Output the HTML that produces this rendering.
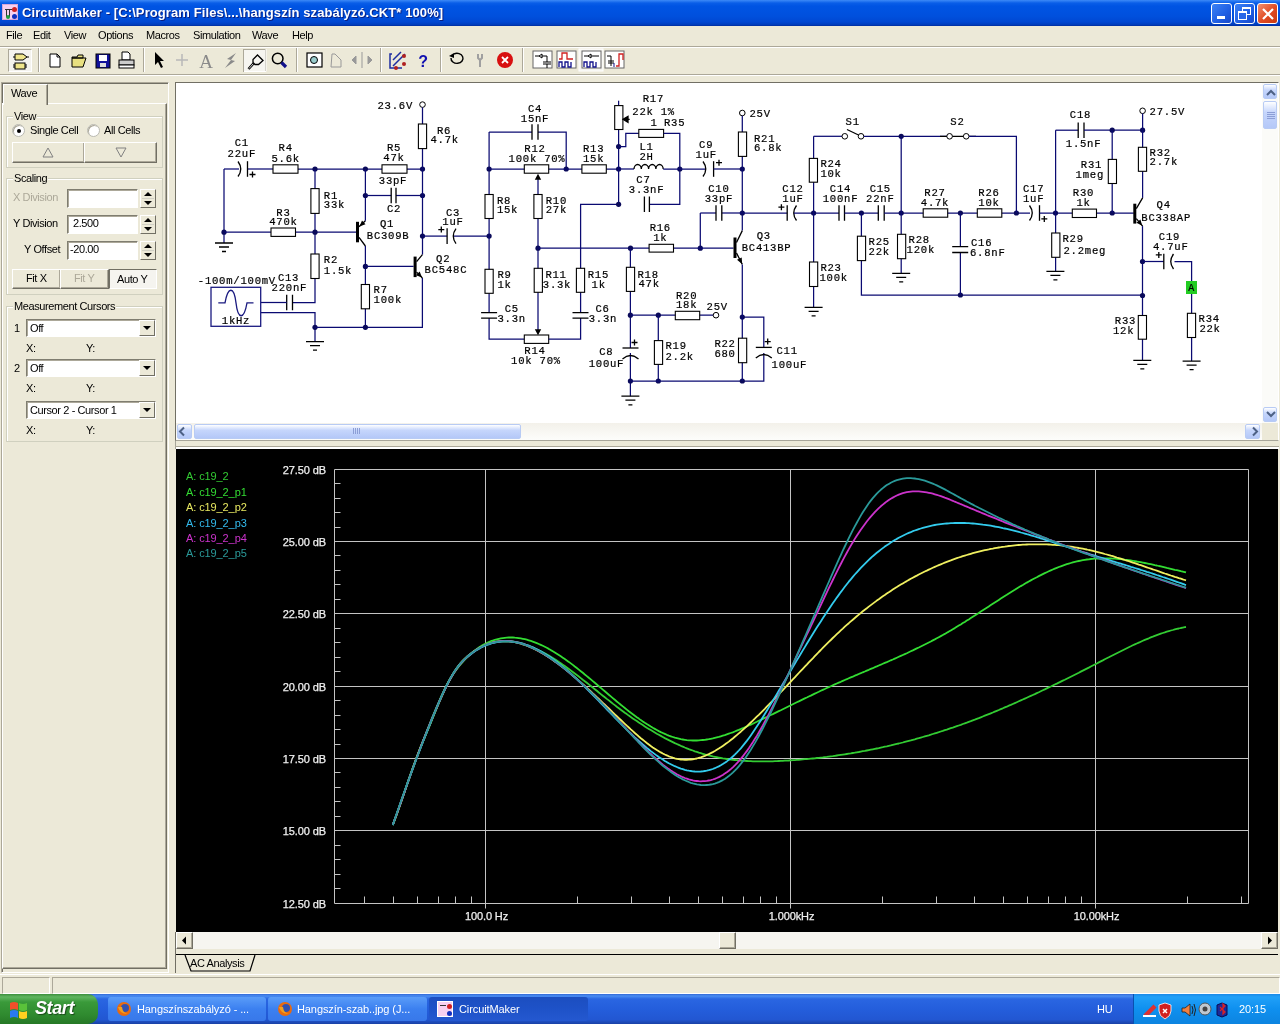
<!DOCTYPE html>
<html><head><meta charset="utf-8">
<style>
*{box-sizing:border-box}
html,body{margin:0;padding:0;width:1280px;height:1024px;overflow:hidden;background:#ece9d8;font-family:"Liberation Sans",sans-serif;font-size:11px;color:#000;letter-spacing:-0.4px}
.a{position:absolute;will-change:transform}
#title{left:0;top:0;width:1280px;height:26px;background:linear-gradient(#3d8af7 0,#0a5ee8 3px,#0054e3 6px,#0050dd 16px,#0047d2 22px,#003bb8 25px,#002a9a 26px)}
#title .tt{left:22px;top:5px;color:#fff;font-weight:bold;font-size:13px;letter-spacing:0.1px;text-shadow:1px 1px 0 #0a1f80;white-space:nowrap}
.wb{top:3px;width:21px;height:21px;border:1px solid #fff;border-radius:3px;background:linear-gradient(135deg,#3c82f5,#1f5ee3 60%,#1848c8)}
.menu span{position:absolute;top:29px;font-size:11px;will-change:transform}
.sep{width:2px;border-left:1px solid #aca899;border-right:1px solid #fff}
.frame{border:1px solid #7f7d70}
.btn3d{background:#ece9d8;border:1px solid;border-color:#fff #716f64 #716f64 #fff;box-shadow:inset -1px -1px 0 #aca899}
.grp{border:1px solid #d0d0bf;box-shadow:inset 1px 1px 0 #fff}
.lbl{position:absolute;will-change:transform;background:#ece9d8;padding:0 1px;white-space:nowrap}
.edit{background:#fff;border:1px solid;border-color:#7f7d70 #fff #fff #7f7d70;box-shadow:inset 1px 1px 0 #aca899}
.spin{background:#ece9d8;border:1px solid;border-color:#fff #716f64 #716f64 #fff}
.tri{width:0;height:0;border-left:4px solid transparent;border-right:4px solid transparent}
svg text{font-family:"Liberation Mono",monospace}
#sch{will-change:transform}
#sch text{font-size:10.6px;letter-spacing:0.75px;fill:#000;stroke:#000;stroke-width:0.2px}
#sch .w{stroke:#0a0a72;stroke-width:1.25;fill:none}
#sch .dt{fill:#0a0a5a}
#sch .rb{fill:#fff;stroke:#000;stroke-width:1.1}
#sch .pl{stroke:#000;stroke-width:1.3;fill:none}
#sch .tm{fill:#fff;stroke:#000;stroke-width:1}
#sch .src{fill:#fff;stroke:#1a1a80;stroke-width:1.3}
#sch .sw{stroke:#1a1a80;stroke-width:1.3;fill:none}
#chart text{font-family:"Liberation Sans",sans-serif;letter-spacing:-0.1px}
#chart .ct{fill:#f0f0f0;font-size:11px;stroke:#f0f0f0;stroke-width:0.25px}
#chart .lg{font-size:11px}
.xpbtn{background:linear-gradient(#fff 0,#c6d6fc 40%,#b4c8f8);border:1px solid #b8cbf4;border-radius:2px}
.task{top:997px;height:24px;border-radius:3px;color:#fff;font-size:11px;white-space:nowrap;overflow:hidden}
</style></head><body>
<!-- title bar -->
<div id="title" class="a">
  <div class="a" style="left:2px;top:4px;width:16px;height:16px;background:#f7d0f0;border:1px solid #d8a8d8">
    <div class="a" style="left:2px;top:4px;width:7px;height:1px;background:#333"></div>
    <div class="a" style="left:3px;top:4px;width:1px;height:8px;background:#333"></div>
    <div class="a" style="left:6px;top:4px;width:1px;height:8px;background:#333"></div>
    <div class="a" style="left:9px;top:2px;width:5px;height:5px;border-radius:3px;background:#d02020"></div>
    <div class="a" style="left:9px;top:9px;width:5px;height:5px;border-radius:3px;background:#1030c0"></div>
    <div class="a" style="left:3px;top:10px;width:4px;height:4px;border-radius:2px;background:#20a040"></div>
  </div>
  <div class="a tt">CircuitMaker - [C:\Program Files\...\hangszín szabályzó.CKT* 100%]</div>
  <div class="a wb" style="left:1211px"><div class="a" style="left:5px;top:12px;width:8px;height:3px;background:#fff"></div></div>
  <div class="a wb" style="left:1234px"><div class="a" style="left:7px;top:3px;width:9px;height:8px;border:1px solid #fff;border-top-width:2px"></div><div class="a" style="left:3px;top:7px;width:9px;height:9px;border:1px solid #fff;border-top-width:2px;background:#2a68e8"></div></div>
  <div class="a wb" style="left:1257px;background:linear-gradient(135deg,#f09070,#e04a22 55%,#c83a10)"><svg class="a" style="left:4px;top:4px" width="12" height="12"><path d="M1,1 L11,11 M11,1 L1,11" stroke="#fff" stroke-width="2.2"/></svg></div>
</div>
<!-- menu -->
<div class="menu">
<span style="left:6px">File</span><span style="left:33px">Edit</span><span style="left:64px">View</span><span style="left:98px">Options</span><span style="left:146px">Macros</span><span style="left:193px">Simulation</span><span style="left:252px">Wave</span><span style="left:292px">Help</span>
</div>
<div class="a" style="left:0;top:46px;width:1280px;height:1px;background:#aca899"></div>
<div class="a" style="left:0;top:47px;width:1280px;height:1px;background:#fff"></div>
<div class="a" style="left:0;top:74px;width:1280px;height:1px;background:#aca899"></div>
<div class="a" style="left:0;top:75px;width:1280px;height:1px;background:#fff"></div>
<!-- toolbar -->
<div class="a" style="left:8px;top:49px;width:24px;height:23px;background:#f4f3ee;border:1px solid;border-color:#aca899 #fff #fff #aca899"></div>
<svg class="a" style="left:0;top:44px" width="640" height="32">
 <g stroke="#000" stroke-width="1" fill="#f0e68c">
  <path d="M15,10 h8 l4,3 l-4,3 h-8 z"/><path d="M13,13 h2 M27,13 h2"/>
  <rect x="15" y="19" width="10" height="6"/><path d="M13,21 h2 M13,23 h2 M25,21 h2 M25,23 h2"/>
 </g>
 <path d="M38.5,4 V28" stroke="#aca899"/><path d="M39.5,4 V28" stroke="#fff"/>
 <path d="M50,10 h7 l3,3 v10 h-10 z" fill="#fff" stroke="#000"/><path d="M57,10 v3 h3" fill="none" stroke="#000"/>
 <path d="M72,13 h5 l1,-2 h5 v3 h-11 z M72,14 h14 l-3,9 h-11 z" fill="#e8e080" stroke="#000"/>
 <rect x="96" y="10" width="14" height="14" fill="#10109a" stroke="#000"/><rect x="99" y="11" width="8" height="6" fill="#fff"/><rect x="100" y="19" width="6" height="4" fill="#ddd"/>
 <path d="M122,8 h6 l2,2 v6 h-8 z" fill="#fff" stroke="#000"/><rect x="119" y="16" width="15" height="5" fill="#ccc" stroke="#000"/><rect x="119" y="21" width="15" height="3" fill="#fff" stroke="#000"/>
 <path d="M143.5,4 V28" stroke="#aca899"/><path d="M144.5,4 V28" stroke="#fff"/>
 <path d="M155,8 l0,13 l3,-3 l3,6 l2,-1 l-3,-6 l4,0 z" fill="#000"/>
 <path d="M182,10 v12 M176,16 h12" stroke="#b8b8b8" stroke-width="1.5"/>
 <text x="206" y="24" text-anchor="middle" style="font-family:'Liberation Serif',serif;font-size:19px;fill:#8a8a8a">A</text>
 <path d="M236,9 l-9,6 l4,1 l-6,8 l10,-7 l-4,-1 z" fill="#8a8a8a"/>
 <rect x="243.5" y="5.5" width="22" height="22" fill="#f6f5f0" stroke="#aca899"/><path d="M244,27.5 H266 V5" stroke="#fff" fill="none"/>
 <path d="M257.5,11 L263,16.5 L258.5,20.5 L255,20.5 L253,18.5 L253,15.5 Z" fill="none" stroke="#000" stroke-width="1.3"/>
 <path d="M253.5,19.5 L248.5,25" stroke="#000" stroke-width="2.6"/><path d="M253,20 L249,24.5" stroke="#fff" stroke-width="0.8"/>
 <circle cx="277.7" cy="14.5" r="5.3" fill="none" stroke="#000" stroke-width="1.5"/><path d="M281.5,18.5 l4.5,4.5" stroke="#10108a" stroke-width="3.2"/>
 <path d="M296.5,4 V28" stroke="#aca899"/><path d="M297.5,4 V28" stroke="#fff"/>
 <rect x="307" y="9" width="15" height="14" fill="#fff" stroke="#000" stroke-width="1.2"/><circle cx="314" cy="16" r="3.5" fill="#9cc" stroke="#000"/>
 <path d="M332,10 h3 l6,6 v7 h-10 z" fill="none" stroke="#999"/>
 <path d="M356,12 l-4,4 l4,4 z M368,12 l4,4 l-4,4 z M362,8 v16" fill="#999" stroke="#999"/>
 <path d="M380.5,4 V28" stroke="#aca899"/><path d="M381.5,4 V28" stroke="#fff"/>
 <path d="M392,10 h-2 v14 h12 M393,22 l12,-12 M393,16 l8,-8" stroke="#1c2ca0" stroke-width="1.5" fill="none"/><circle cx="404" cy="12" r="2" fill="#b02020"/><circle cx="404" cy="20" r="2" fill="#b02020"/><circle cx="396" cy="24" r="2" fill="#b02020"/>
 <text x="423" y="23" text-anchor="middle" style="font-family:'Liberation Sans';font-weight:bold;font-size:16px;fill:#1010b0">?</text>
 <path d="M440.5,4 V28" stroke="#aca899"/><path d="M441.5,4 V28" stroke="#fff"/>
 <path d="M451,14 a6,5 0 1 0 3,-4" fill="none" stroke="#000" stroke-width="1.4"/><path d="M449,12 l5,-3 l0,5 z" fill="#000"/>
 <path d="M478,10 v4 l2,2 v7 M482,10 v4 l-2,2" stroke="#a0a0a0" stroke-width="2" fill="none"/>
 <circle cx="505" cy="16" r="8" fill="#d81010"/><path d="M502,13 l6,6 M508,13 l-6,6" stroke="#fff" stroke-width="1.8"/>
 <path d="M522.5,4 V28" stroke="#aca899"/><path d="M523.5,4 V28" stroke="#fff"/>
 <rect x="533" y="7" width="19" height="17" fill="#fff" stroke="#666"/><path d="M535,12 h4 l3,-2 v4 l-3,-2 M542,12 h5 v6 M543,18 h8 M543,20 h8 M547,20 v4" stroke="#000" fill="none"/>
 <rect x="557" y="7" width="19" height="17" fill="#fff" stroke="#666"/><path d="M559,15 h3 v-6 h5 v6 h6" stroke="#d02020" fill="none" stroke-width="1.3"/><path d="M559,23 v-5 h3 v5 h3 v-5 h3 v5 h3 v-5" stroke="#10108a" fill="none" stroke-width="1.3"/>
 <rect x="579" y="5" width="24" height="22" fill="#f4f3ee" stroke="#fff"/>
 <rect x="582" y="7" width="19" height="17" fill="#fff" stroke="#666"/><path d="M584,12 h4 l3,-2 v4 l-3,-2 M591,12 h8" stroke="#000" fill="none"/><path d="M584,23 v-5 h3 v5 h3 v-5 h3 v5 h3 v-5" stroke="#10108a" fill="none" stroke-width="1.3"/>
 <rect x="605" y="7" width="19" height="17" fill="#fff" stroke="#666"/><path d="M607,12 h4 M611,12 v10 M608,17 h6 M608,19 h6" stroke="#000" fill="none"/><path d="M616,22 h3 v-12 h4 v6" stroke="#d02020" fill="none" stroke-width="1.3"/><path d="M614,23 v-4" stroke="#10108a"/>
</svg>
<!-- left panel -->
<div class="a" style="left:1px;top:82px;width:168px;height:891px;border:1px solid;border-color:#aca899 #fff #fff #aca899;box-shadow:inset 1px 1px 0 #716f64"></div>
<div class="a" style="left:2px;top:103px;width:165px;height:866px;border:1px solid;border-color:#fff #716f64 #716f64 #fff;box-shadow:inset -1px -1px 0 #aca899"></div>
<div class="a" style="left:3px;top:84px;width:45px;height:21px;background:#ece9d8;border:1px solid;border-bottom:none;border-color:#fff #716f64 #716f64 #fff;box-shadow:inset -1px 0 0 #aca899"></div>
<div class="a" style="left:11px;top:87px">Wave</div>
<!-- View group -->
<div class="a grp" style="left:6px;top:116px;width:157px;height:52px"></div>
<div class="lbl" style="left:13px;top:110px">View</div>
<div class="a" style="left:12px;top:124px;width:13px;height:13px;border-radius:7px;background:#fff;border:1px solid #b8b8b0;box-shadow:inset 1px 1px 0 #aca899"><div class="a" style="left:4px;top:4px;width:4px;height:4px;border-radius:2px;background:#000"></div></div>
<div class="a" style="left:30px;top:124px">Single Cell</div>
<div class="a" style="left:87px;top:124px;width:13px;height:13px;border-radius:7px;background:#fff;border:1px solid #b8b8b0;box-shadow:inset 1px 1px 0 #aca899"></div>
<div class="a" style="left:104px;top:124px">All Cells</div>
<div class="a btn3d" style="left:12px;top:142px;width:73px;height:21px"></div>
<div class="a btn3d" style="left:84px;top:142px;width:73px;height:21px"></div>
<svg class="a" style="left:0;top:140px" width="170" height="25"><path d="M43,17 h10 l-5,-9 z" fill="none" stroke="#808080"/><path d="M116,8 h10 l-5,9 z" fill="none" stroke="#808080"/></svg>
<!-- Scaling -->
<div class="a grp" style="left:6px;top:178px;width:157px;height:117px"></div>
<div class="lbl" style="left:13px;top:172px">Scaling</div>
<div class="a" style="left:13px;top:191px;color:#aca899">X Division</div>
<div class="a edit" style="left:67px;top:189px;width:71px;height:19px"></div>
<div class="a spin" style="left:140px;top:189px;width:16px;height:19px"></div>
<div class="a" style="left:13px;top:217px">Y Division</div>
<div class="a edit" style="left:67px;top:215px;width:71px;height:19px"></div>
<div class="a" style="left:73px;top:217px">2.500</div>
<div class="a spin" style="left:140px;top:215px;width:16px;height:19px"></div>
<div class="a" style="left:24px;top:243px">Y Offset</div>
<div class="a edit" style="left:67px;top:241px;width:71px;height:19px"></div>
<div class="a" style="left:70px;top:243px">-20.00</div>
<div class="a spin" style="left:140px;top:241px;width:16px;height:19px"></div>
<svg class="a" style="left:140px;top:189px" width="16" height="72">
 <path d="M4,7 h8 l-4,-4 z M4,12 h8 l-4,4 z M4,33 h8 l-4,-4 z M4,38 h8 l-4,4 z M4,59 h8 l-4,-4 z M4,64 h8 l-4,4 z" fill="#000"/>
 <path d="M2,9.5 h12 M2,35.5 h12 M2,61.5 h12" stroke="#d0cfc4"/>
</svg>
<div class="a btn3d" style="left:12px;top:269px;width:49px;height:20px"></div>
<div class="a btn3d" style="left:60px;top:269px;width:49px;height:20px"></div>
<div class="a" style="left:109px;top:269px;width:48px;height:20px;background:#f5f4ef;border:1px solid;border-color:#716f64 #fff #fff #716f64"></div>
<div class="a" style="left:26px;top:272px">Fit X</div>
<div class="a" style="left:74px;top:272px;color:#aca899">Fit Y</div>
<div class="a" style="left:117px;top:273px">Auto Y</div>
<!-- Measurement cursors -->
<div class="a grp" style="left:6px;top:306px;width:157px;height:136px"></div>
<div class="lbl" style="left:13px;top:300px">Measurement Cursors</div>
<div class="a" style="left:14px;top:322px">1</div>
<div class="a edit" style="left:26px;top:319px;width:130px;height:18px"></div>
<div class="a" style="left:30px;top:322px">Off</div>
<div class="a spin" style="left:139px;top:320px;width:16px;height:16px"></div>
<div class="a" style="left:26px;top:342px">X:</div><div class="a" style="left:86px;top:342px">Y:</div>
<div class="a" style="left:14px;top:362px">2</div>
<div class="a edit" style="left:26px;top:359px;width:130px;height:18px"></div>
<div class="a" style="left:30px;top:362px">Off</div>
<div class="a spin" style="left:139px;top:360px;width:16px;height:16px"></div>
<div class="a" style="left:26px;top:382px">X:</div><div class="a" style="left:86px;top:382px">Y:</div>
<div class="a edit" style="left:26px;top:401px;width:130px;height:18px"></div>
<div class="a" style="left:30px;top:404px">Cursor 2 - Cursor 1</div>
<div class="a spin" style="left:139px;top:402px;width:16px;height:16px"></div>
<div class="a" style="left:26px;top:424px">X:</div><div class="a" style="left:86px;top:424px">Y:</div>
<svg class="a" style="left:139px;top:320px" width="16" height="100"><path d="M4,6 h8 l-4,4 z M4,46 h8 l-4,4 z M4,88 h8 l-4,4 z" fill="#000"/></svg>
<!-- schematic window -->
<div class="a" style="left:175px;top:82px;width:1104px;height:359px;border:1px solid;border-color:#716f64 #fff #a8a69a #716f64;background:#fff"></div>
<div class="a" style="left:1262px;top:83px;width:16px;height:340px;background:#fbfbf8"></div>
<div class="a xpbtn" style="left:1263px;top:84px;width:14px;height:15px"></div>
<div class="a xpbtn" style="left:1263px;top:101px;width:14px;height:28px"></div>
<div class="a xpbtn" style="left:1263px;top:407px;width:14px;height:15px"></div>
<div class="a" style="left:176px;top:423px;width:1086px;height:17px;background:linear-gradient(#f3f1ea,#fdfdfb)"></div>
<div class="a xpbtn" style="left:177px;top:424px;width:15px;height:15px"></div>
<div class="a xpbtn" style="left:194px;top:424px;width:327px;height:15px"></div>
<div class="a xpbtn" style="left:1245px;top:424px;width:15px;height:15px"></div>
<div class="a" style="left:1262px;top:423px;width:16px;height:17px;background:#ece9d8"></div>
<svg class="a" style="left:176px;top:83px" width="1102" height="357">
 <path d="M1091,12 l4,-4 l4,4 M1091,329 l4,4 l4,-4 M8,344.5 l-4,4 l4,4 M1077,344.5 l4,4 l-4,4" stroke="#4d6185" stroke-width="2" fill="none"/>
 <path d="M1091,29.5 h8 M1091,31.5 h8 M1091,33.5 h8 M1091,35.5 h8" stroke="#8c9ed6" stroke-width="1"/>
 <path d="M177.5,345 v6 M179.5,345 v6 M181.5,345 v6 M183.5,345 v6" stroke="#8c9ed6" stroke-width="1"/>
</svg>
<svg id="sch" class="a" style="left:0;top:0" width="1262" height="423" viewBox="0 0 1262 423">
<defs><clipPath id="cp"><rect x="176" y="83" width="1086" height="340"/></clipPath></defs>
<g clip-path="url(#cp)">
<path d="M224.0,169.0 L239.0,169.0" class="w"/>
<path d="M247.0,169.0 L273.0,169.0" class="w"/>
<path d="M298.0,169.0 L422.0,169.0" class="w"/>
<path d="M247.5,161.2 V176.8" class="pl"/>
<path d="M238.0,161.5 Q243.5,169.0 238.0,176.5" class="pl" fill="none"/>
<path d="M249.5,174.5 H255.5 M252.5,171.5 V177.5" class="pl"/>
<rect x="273.0" y="164.8" width="25.0" height="8.4" class="rb"/>
<rect x="382.0" y="164.8" width="25.0" height="8.4" class="rb"/>
<circle cx="315.0" cy="169.0" r="2.6" class="dt"/>
<circle cx="365.4" cy="169.0" r="2.6" class="dt"/>
<circle cx="422.5" cy="169.0" r="2.6" class="dt"/>
<path d="M224.0,169.0 L224.0,243.0" class="w"/>
<circle cx="224.0" cy="232.2" r="2.6" class="dt"/>
<path d="M224.0,232.2 L356.0,232.2" class="w"/>
<rect x="271.0" y="228.0" width="24.5" height="8.4" class="rb"/>
<path d="M315.0,169.0 L315.0,302.5 L292.5,302.5" class="w"/>
<rect x="310.9" y="188.6" width="8.2" height="24.8" class="rb"/>
<rect x="310.9" y="254.0" width="8.2" height="24.5" class="rb"/>
<circle cx="315.0" cy="232.2" r="2.6" class="dt"/>
<path d="M215.0,243.0 H233.0 M219.0,247.0 H229.0 M222.0,251.5 H226.0" class="pl"/>
<path d="M286.7,294.7 V310.3 M292.5,294.7 V310.3" class="pl"/>
<path d="M260.7,302.5 L286.7,302.5" class="w"/>
<path d="M260.7,312.7 L315.0,312.7 L315.0,341.6" class="w"/>
<path d="M306.0,341.6 H324.0 M310.0,345.6 H320.0 M313.0,350.1 H317.0" class="pl"/>
<circle cx="315.0" cy="327.3" r="2.6" class="dt"/>
<path d="M315.0,327.3 L422.4,327.3 L422.4,278.0" class="w"/>
<rect x="356.0" y="221.8" width="3" height="20.5" fill="#000"/>
<path d="M359.0,226.8 L365.4,220.8 M359.0,237.3 L365.4,246.0" class="pl"/>
<path d="M359.4,226.5 L362.0,220.5 L365.5,224.3 z" fill="#000"/>
<path d="M365.4,169.0 L365.4,220.8" class="w"/>
<circle cx="365.4" cy="195.5" r="2.6" class="dt"/>
<path d="M365.4,195.5 L391.2,195.5" class="w"/>
<path d="M396.0,195.5 L422.5,195.5" class="w"/>
<path d="M391.2,187.7 V203.3 M396.0,187.7 V203.3" class="pl"/>
<circle cx="422.5" cy="195.5" r="2.6" class="dt"/>
<path d="M365.4,246.0 L365.4,327.3" class="w"/>
<circle cx="365.4" cy="266.4" r="2.6" class="dt"/>
<path d="M365.4,266.4 L413.6,266.4" class="w"/>
<rect x="361.3" y="284.5" width="8.2" height="24.3" class="rb"/>
<circle cx="365.4" cy="327.3" r="2.6" class="dt"/>
<circle cx="422.5" cy="104.6" r="2.8" class="tm"/>
<path d="M422.5,107.4 L422.5,254.6" class="w"/>
<rect x="418.4" y="124.0" width="8.2" height="24.6" class="rb"/>
<circle cx="422.5" cy="236.1" r="2.6" class="dt"/>
<rect x="413.6" y="256.6" width="3" height="20.5" fill="#000"/>
<path d="M416.6,261.6 L422.4,254.6 M416.6,272.1 L422.4,278.0" class="pl"/>
<path d="M422.0,277.6 L416.0,275.2 L419.7,271.5 z" fill="#000"/>
<rect x="211" y="287.3" width="49.7" height="39" class="src"/>
<path d="M218.3,302.9 H225 C228,286 234,286 236,302.9 C238,320 244,320 247,302.9 H253.5" class="sw"/>
<text x="236.0" y="324.3" text-anchor="middle">1kHz</text>
<text x="197.8" y="284.2" text-anchor="start">-100m/100mV</text>
<text x="277.9" y="280.6" text-anchor="start">C13</text>
<text x="271.6" y="291.1" text-anchor="start">220nF</text>
<text x="241.8" y="146.3" text-anchor="middle">C1</text>
<text x="241.8" y="157.1" text-anchor="middle">22uF</text>
<text x="285.7" y="151.2" text-anchor="middle">R4</text>
<text x="285.7" y="161.6" text-anchor="middle">5.6k</text>
<text x="394.0" y="151.2" text-anchor="middle">R5</text>
<text x="394.0" y="161.0" text-anchor="middle">47k</text>
<text x="393.0" y="184.4" text-anchor="middle">33pF</text>
<text x="394.0" y="211.8" text-anchor="middle">C2</text>
<text x="323.8" y="199.1" text-anchor="start">R1</text>
<text x="323.8" y="207.9" text-anchor="start">33k</text>
<text x="283.4" y="215.6" text-anchor="middle">R3</text>
<text x="283.4" y="225.4" text-anchor="middle">470k</text>
<text x="387.0" y="227.4" text-anchor="middle">Q1</text>
<text x="366.8" y="239.1" text-anchor="start">BC309B</text>
<text x="323.8" y="263.1" text-anchor="start">R2</text>
<text x="323.8" y="273.9" text-anchor="start">1.5k</text>
<text x="373.6" y="293.4" text-anchor="start">R7</text>
<text x="373.6" y="303.2" text-anchor="start">100k</text>
<text x="443.2" y="261.6" text-anchor="middle">Q2</text>
<text x="424.6" y="273.3" text-anchor="start">BC548C</text>
<text x="377.5" y="109.2" text-anchor="start">23.6V</text>
<text x="437.0" y="133.6" text-anchor="start">R6</text>
<text x="430.5" y="143.4" text-anchor="start">4.7k</text>
<path d="M422.5,236.1 L447.1,236.1" class="w"/>
<path d="M453.0,236.1 L489.1,236.1" class="w"/>
<path d="M447.1,228.3 V243.9" class="pl"/>
<path d="M456.0,228.6 Q450.5,236.1 456.0,243.6" class="pl" fill="none"/>
<path d="M438.3,229.6 H444.3 M441.3,226.6 V232.6" class="pl"/>
<text x="453.0" y="215.6" text-anchor="middle">C3</text>
<text x="453.0" y="225.4" text-anchor="middle">1uF</text>
<circle cx="489.1" cy="236.1" r="2.6" class="dt"/>
<path d="M489.1,132.0 L489.1,312.7" class="w"/>
<path d="M489.1,318.1 L489.1,339.2 L524.3,339.2" class="w"/>
<rect x="485.0" y="194.5" width="8.2" height="24.0" class="rb"/>
<rect x="485.0" y="269.3" width="8.2" height="24.0" class="rb"/>
<path d="M481.1,312.7 H497.1 M481.1,318.1 H497.1" class="pl"/>
<circle cx="489.1" cy="169.0" r="2.6" class="dt"/>
<path d="M489.1,132.0 L532.0,132.0" class="w"/>
<path d="M538.0,132.0 L566.2,132.0 L566.2,169.0" class="w"/>
<path d="M532.0,124.2 V139.8 M538.0,124.2 V139.8" class="pl"/>
<circle cx="566.2" cy="169.0" r="2.6" class="dt"/>
<path d="M489.1,169.0 L618.6,169.0" class="w"/>
<rect x="524.3" y="164.8" width="24.4" height="8.4" class="rb"/>
<rect x="581.9" y="164.8" width="24.4" height="8.4" class="rb"/>
<circle cx="618.6" cy="169.0" r="2.6" class="dt"/>
<path d="M538.0,177.0 L538.0,330.0" class="w"/>
<path d="M538,173.8 l-3.2,6 h6.4 z" fill="#000"/>
<rect x="533.9" y="194.5" width="8.2" height="24.0" class="rb"/>
<rect x="534.2" y="268.3" width="8.2" height="24.0" class="rb"/>
<circle cx="538.0" cy="248.2" r="2.6" class="dt"/>
<path d="M538,335.2 l-3.2,-6 h6.4 z" fill="#000"/>
<rect x="524.3" y="335.0" width="24.4" height="8.4" class="rb"/>
<path d="M548.7,339.2 L580.6,339.2 L580.6,318.1" class="w"/>
<path d="M580.6,312.7 L580.6,204.3 L618.6,204.3" class="w"/>
<rect x="576.4" y="268.3" width="8.2" height="24.0" class="rb"/>
<path d="M572.5,312.7 H588.5 M572.5,318.1 H588.5" class="pl"/>
<path d="M618.6,100.7 L618.6,204.3" class="w"/>
<rect x="614.7" y="105.6" width="8.2" height="23.9" class="rb"/>
<path d="M629.7,119.3 H624 M623,119.3 l5,-3 v6 z" class="pl"/>
<path d="M623,119.3 l5,-3 v6 z" fill="#000"/>
<circle cx="618.6" cy="146.6" r="2.6" class="dt"/>
<circle cx="618.6" cy="204.3" r="2.6" class="dt"/>
<path d="M618.6,146.6 L625.8,146.6 L625.8,133.4 L639.0,133.4" class="w"/>
<rect x="638.8" y="129.4" width="24.8" height="8.0" class="rb"/>
<path d="M663.6,133.4 L679.8,133.4 L679.8,204.3 L649.4,204.3" class="w"/>
<path d="M644.4,196.5 V212.1 M649.4,196.5 V212.1" class="pl"/>
<circle cx="679.8" cy="169.0" r="2.6" class="dt"/>
<path d="M618.6,169.0 L634.0,169.0" class="w"/>
<path d="M634,169 a3.65,4.5 0 0 1 7.3,0 a3.65,4.5 0 0 1 7.3,0 a3.65,4.5 0 0 1 7.3,0 a3.65,4.5 0 0 1 7.3,0" class="pl" fill="none"/>
<path d="M663.2,169.0 L705.0,169.0" class="w"/>
<path d="M713.6,161.2 V176.8" class="pl"/>
<path d="M703.0,161.5 Q708.5,169.0 703.0,176.5" class="pl" fill="none"/>
<path d="M716.0,162.7 H722.0 M719.0,159.7 V165.7" class="pl"/>
<path d="M713.6,169.0 L742.3,169.0" class="w"/>
<circle cx="742.3" cy="169.0" r="2.6" class="dt"/>
<circle cx="742.3" cy="113.0" r="2.8" class="tm"/>
<path d="M742.3,115.8 L742.3,230.6" class="w"/>
<rect x="738.4" y="132.0" width="8.2" height="24.4" class="rb"/>
<circle cx="742.3" cy="213.0" r="2.6" class="dt"/>
<path d="M700.3,213.0 L716.0,213.0" class="w"/>
<path d="M721.8,213.0 L742.3,213.0" class="w"/>
<path d="M716.0,205.2 V220.8 M721.8,205.2 V220.8" class="pl"/>
<path d="M700.3,213.0 L700.3,248.2" class="w"/>
<circle cx="700.3" cy="248.2" r="2.6" class="dt"/>
<path d="M538.0,248.2 L733.5,248.2" class="w"/>
<circle cx="630.5" cy="248.2" r="2.6" class="dt"/>
<rect x="649.1" y="244.3" width="24.4" height="7.8" class="rb"/>
<rect x="733.5" y="237.5" width="3" height="20.5" fill="#000"/>
<path d="M736.5,242.5 L742.3,230.6 M736.5,253.0 L742.3,264.4" class="pl"/>
<path d="M742.1,264.0 L737.0,259.8 L741.7,257.4 z" fill="#000"/>
<path d="M630.4,248.2 L630.4,348.0" class="w"/>
<path d="M630.4,353.0 L630.4,396.2" class="w"/>
<rect x="626.4" y="267.3" width="8.2" height="24.1" class="rb"/>
<circle cx="630.4" cy="315.2" r="2.6" class="dt"/>
<circle cx="630.4" cy="381.0" r="2.6" class="dt"/>
<path d="M622.5,348.0 H638.5" class="pl"/>
<path d="M622.5,359.0 Q630.5,352.0 638.5,359.0" class="pl" fill="none"/>
<path d="M631.5,342.5 H637.5 M634.5,339.5 V345.5" class="pl"/>
<path d="M621.4,396.2 H639.4 M625.4,400.2 H635.4 M628.4,404.8 H632.4" class="pl"/>
<path d="M630.4,315.2 L713.3,315.2" class="w"/>
<circle cx="716.0" cy="315.2" r="2.8" class="tm"/>
<circle cx="658.3" cy="315.2" r="2.6" class="dt"/>
<rect x="675.3" y="311.3" width="24.4" height="8.4" class="rb"/>
<path d="M658.3,315.2 L658.3,381.0" class="w"/>
<rect x="654.4" y="340.6" width="8.2" height="23.8" class="rb"/>
<circle cx="658.3" cy="381.0" r="2.6" class="dt"/>
<path d="M630.4,381.0 L763.8,381.0 L763.8,353.0" class="w"/>
<path d="M763.8,347.4 L763.8,317.1 L742.3,317.1" class="w"/>
<circle cx="742.3" cy="381.0" r="2.6" class="dt"/>
<circle cx="742.3" cy="317.1" r="2.6" class="dt"/>
<path d="M742.3,264.4 L742.3,381.0" class="w"/>
<rect x="738.5" y="338.2" width="8.2" height="24.5" class="rb"/>
<path d="M755.8,347.4 H771.8" class="pl"/>
<path d="M755.8,358.0 Q763.8,351.0 771.8,358.0" class="pl" fill="none"/>
<path d="M764.7,341.6 H770.7 M767.7,338.6 V344.6" class="pl"/>
<text x="497.5" y="278.4" text-anchor="start">R9</text>
<text x="497.5" y="288.1" text-anchor="start">1k</text>
<text x="504.7" y="312.0" text-anchor="start">C5</text>
<text x="497.5" y="322.1" text-anchor="start">3.3n</text>
<text x="545.4" y="277.8" text-anchor="start">R11</text>
<text x="542.8" y="287.6" text-anchor="start">3.3k</text>
<text x="587.7" y="277.8" text-anchor="start">R15</text>
<text x="591.6" y="287.6" text-anchor="start">1k</text>
<text x="595.5" y="312.0" text-anchor="start">C6</text>
<text x="588.7" y="322.1" text-anchor="start">3.3n</text>
<text x="535.0" y="354.0" text-anchor="middle">R14</text>
<text x="536.0" y="364.3" text-anchor="middle">10k 70%</text>
<text x="637.5" y="277.8" text-anchor="start">R18</text>
<text x="638.5" y="286.6" text-anchor="start">47k</text>
<text x="606.3" y="354.6" text-anchor="middle">C8</text>
<text x="588.7" y="367.0" text-anchor="start">100uF</text>
<text x="686.6" y="298.6" text-anchor="middle">R20</text>
<text x="686.6" y="308.4" text-anchor="middle">18k</text>
<text x="706.6" y="310.4" text-anchor="start">25V</text>
<text x="665.5" y="349.1" text-anchor="start">R19</text>
<text x="665.5" y="359.8" text-anchor="start">2.2k</text>
<text x="714.4" y="347.1" text-anchor="start">R22</text>
<text x="714.4" y="356.9" text-anchor="start">680</text>
<text x="776.5" y="354.0" text-anchor="start">C11</text>
<text x="771.6" y="367.6" text-anchor="start">100uF</text>
<text x="496.9" y="203.9" text-anchor="start">R8</text>
<text x="496.9" y="212.7" text-anchor="start">15k</text>
<text x="535.0" y="111.6" text-anchor="middle">C4</text>
<text x="535.0" y="121.5" text-anchor="middle">15nF</text>
<text x="535.0" y="152.2" text-anchor="middle">R12</text>
<text x="508.6" y="162.3" text-anchor="start">100k 70%</text>
<text x="593.6" y="152.2" text-anchor="middle">R13</text>
<text x="593.6" y="162.0" text-anchor="middle">15k</text>
<text x="545.7" y="203.9" text-anchor="start">R10</text>
<text x="545.7" y="212.7" text-anchor="start">27k</text>
<text x="653.4" y="102.4" text-anchor="middle">R17</text>
<text x="632.3" y="115.1" text-anchor="start">22k 1%</text>
<text x="650.5" y="126.4" text-anchor="start">1</text>
<text x="664.0" y="126.4" text-anchor="start">R35</text>
<text x="646.5" y="150.2" text-anchor="middle">L1</text>
<text x="646.5" y="160.0" text-anchor="middle">2H</text>
<text x="643.4" y="183.4" text-anchor="middle">C7</text>
<text x="628.8" y="193.2" text-anchor="start">3.3nF</text>
<text x="660.3" y="231.3" text-anchor="middle">R16</text>
<text x="660.3" y="241.1" text-anchor="middle">1k</text>
<text x="706.2" y="148.3" text-anchor="middle">C9</text>
<text x="706.2" y="158.1" text-anchor="middle">1uF</text>
<text x="749.5" y="117.0" text-anchor="start">25V</text>
<text x="754.0" y="141.5" text-anchor="start">R21</text>
<text x="754.0" y="151.2" text-anchor="start">6.8k</text>
<text x="718.9" y="192.2" text-anchor="middle">C10</text>
<text x="718.9" y="202.0" text-anchor="middle">33pF</text>
<text x="763.8" y="239.1" text-anchor="middle">Q3</text>
<text x="741.7" y="250.8" text-anchor="start">BC413BP</text>
<path d="M742.3,213.0 L787.2,213.0" class="w"/>
<path d="M787.2,205.2 V220.8" class="pl"/>
<path d="M796.5,205.5 Q791.0,213.0 796.5,220.5" class="pl" fill="none"/>
<path d="M778.4,207.2 H784.4 M781.4,204.2 V210.2" class="pl"/>
<path d="M794.0,213.0 L839.0,213.0" class="w"/>
<path d="M839.0,205.2 V220.8 M844.5,205.2 V220.8" class="pl"/>
<path d="M844.5,213.0 L878.3,213.0" class="w"/>
<path d="M878.3,205.2 V220.8 M884.2,205.2 V220.8" class="pl"/>
<path d="M884.2,213.0 L1030.0,213.0" class="w"/>
<path d="M1039.5,205.2 V220.8" class="pl"/>
<path d="M1029.5,205.5 Q1035.0,213.0 1029.5,220.5" class="pl" fill="none"/>
<path d="M1041.3,218.9 H1047.3 M1044.3,215.9 V221.9" class="pl"/>
<path d="M1039.5,213.0 L1133.8,213.0" class="w"/>
<circle cx="813.6" cy="213.0" r="2.6" class="dt"/>
<circle cx="861.4" cy="213.0" r="2.6" class="dt"/>
<circle cx="901.2" cy="213.0" r="2.6" class="dt"/>
<circle cx="960.4" cy="213.0" r="2.6" class="dt"/>
<circle cx="1016.4" cy="213.0" r="2.6" class="dt"/>
<circle cx="1055.5" cy="213.0" r="2.6" class="dt"/>
<circle cx="1112.2" cy="213.0" r="2.6" class="dt"/>
<rect x="923.2" y="208.8" width="24.5" height="8.4" class="rb"/>
<rect x="977.3" y="208.8" width="24.5" height="8.4" class="rb"/>
<rect x="1072.3" y="209.1" width="24.2" height="8.4" class="rb"/>
<path d="M813.6,136.3 L813.6,307.4" class="w"/>
<rect x="809.3" y="158.4" width="8.2" height="23.8" class="rb"/>
<rect x="809.5" y="262.0" width="8.2" height="24.5" class="rb"/>
<path d="M804.6,307.4 H822.6 M808.6,311.4 H818.6 M811.6,315.9 H815.6" class="pl"/>
<path d="M813.6,136.3 L842.0,136.3" class="w"/>
<circle cx="844.8" cy="136.3" r="2.8" class="tm"/>
<circle cx="861.0" cy="136.3" r="2.8" class="tm"/>
<path d="M847,129.5 L858.5,135" class="pl"/>
<path d="M863.8,136.3 L947.0,136.3" class="w"/>
<circle cx="901.2" cy="136.3" r="2.6" class="dt"/>
<circle cx="949.6" cy="136.3" r="2.8" class="tm"/>
<circle cx="966.2" cy="136.3" r="2.8" class="tm"/>
<path d="M952.4,136.3 H963.4 M940,136.3 H946.8 M969,136.3 H976" class="pl"/>
<path d="M969.0,136.3 L1016.4,136.3 L1016.4,213.0" class="w"/>
<path d="M861.4,213.0 L861.4,295.0 L1142.5,295.0" class="w"/>
<rect x="857.4" y="236.2" width="8.2" height="24.4" class="rb"/>
<circle cx="960.4" cy="295.0" r="2.6" class="dt"/>
<path d="M901.2,136.3 L901.2,273.4" class="w"/>
<rect x="897.5" y="234.3" width="8.2" height="24.4" class="rb"/>
<path d="M892.2,273.4 H910.2 M896.2,277.4 H906.2 M899.2,281.9 H903.2" class="pl"/>
<path d="M960.4,213.0 L960.4,246.6" class="w"/>
<path d="M960.4,252.5 L960.4,295.0" class="w"/>
<path d="M952.2,246.6 H968.2 M952.2,252.5 H968.2" class="pl"/>
<path d="M1055.6,130.2 L1055.6,271.4" class="w"/>
<rect x="1051.7" y="233.0" width="8.2" height="24.3" class="rb"/>
<path d="M1046.4,271.4 H1064.4 M1050.4,275.4 H1060.4 M1053.4,279.9 H1057.4" class="pl"/>
<path d="M1055.6,130.2 L1078.2,130.2" class="w"/>
<path d="M1078.2,122.4 V138.0 M1084.0,122.4 V138.0" class="pl"/>
<path d="M1084.0,130.2 L1142.6,130.2" class="w"/>
<circle cx="1112.2" cy="130.2" r="2.6" class="dt"/>
<circle cx="1142.6" cy="130.2" r="2.6" class="dt"/>
<path d="M1112.2,130.2 L1112.2,213.0" class="w"/>
<rect x="1108.3" y="159.4" width="8.2" height="24.1" class="rb"/>
<circle cx="1142.6" cy="110.8" r="2.8" class="tm"/>
<path d="M1142.6,113.5 L1142.6,197.9" class="w"/>
<rect x="1138.4" y="147.3" width="8.2" height="24.0" class="rb"/>
<rect x="1133.3" y="203.7" width="3" height="19.9" fill="#000"/>
<path d="M1136.3,208.7 L1142.6,197.9 M1136.3,218.6 L1142.6,226.1" class="pl"/>
<path d="M1142.3,225.7 L1136.4,222.8 L1140.4,219.5 z" fill="#000"/>
<path d="M1142.5,226.1 L1142.5,360.3" class="w"/>
<circle cx="1142.5" cy="261.5" r="2.6" class="dt"/>
<circle cx="1142.5" cy="295.5" r="2.6" class="dt"/>
<rect x="1138.3" y="315.5" width="8.2" height="23.7" class="rb"/>
<path d="M1133.3,360.3 H1151.3 M1137.3,364.3 H1147.3 M1140.3,368.8 H1144.3" class="pl"/>
<path d="M1142.5,261.5 L1163.8,261.5" class="w"/>
<path d="M1163.8,253.7 V269.3" class="pl"/>
<path d="M1173.5,254.0 Q1168.0,261.5 1173.5,269.0" class="pl" fill="none"/>
<path d="M1155.8,254.9 H1161.8 M1158.8,251.9 V257.9" class="pl"/>
<path d="M1174.5,261.5 L1191.6,261.5 L1191.6,361.1" class="w"/>
<rect x="1186" y="281" width="11" height="13" fill="#22cc22"/>
<text x="1191.6" y="291.3" text-anchor="middle" style="font-size:10px">A</text>
<rect x="1187.4" y="313.3" width="8.2" height="24.2" class="rb"/>
<path d="M1182.6,361.1 H1200.6 M1186.6,365.1 H1196.6 M1189.6,369.6 H1193.6" class="pl"/>
<text x="852.7" y="124.8" text-anchor="middle">S1</text>
<text x="957.4" y="124.8" text-anchor="middle">S2</text>
<text x="820.4" y="166.8" text-anchor="start">R24</text>
<text x="820.4" y="177.2" text-anchor="start">10k</text>
<text x="820.4" y="271.3" text-anchor="start">R23</text>
<text x="819.5" y="281.1" text-anchor="start">100k</text>
<text x="793.0" y="192.2" text-anchor="middle">C12</text>
<text x="793.0" y="202.0" text-anchor="middle">1uF</text>
<text x="840.5" y="192.2" text-anchor="middle">C14</text>
<text x="840.5" y="202.0" text-anchor="middle">100nF</text>
<text x="908.6" y="243.0" text-anchor="start">R28</text>
<text x="906.6" y="253.4" text-anchor="start">120k</text>
<text x="880.3" y="192.2" text-anchor="middle">C15</text>
<text x="880.3" y="202.0" text-anchor="middle">22nF</text>
<text x="935.0" y="196.1" text-anchor="middle">R27</text>
<text x="935.0" y="205.9" text-anchor="middle">4.7k</text>
<text x="989.0" y="196.1" text-anchor="middle">R26</text>
<text x="989.0" y="205.9" text-anchor="middle">10k</text>
<text x="1033.6" y="192.2" text-anchor="middle">C17</text>
<text x="1033.6" y="202.0" text-anchor="middle">1uF</text>
<text x="1083.5" y="196.3" text-anchor="middle">R30</text>
<text x="1083.5" y="206.1" text-anchor="middle">1k</text>
<text x="868.6" y="245.0" text-anchor="start">R25</text>
<text x="868.6" y="254.7" text-anchor="start">22k</text>
<text x="971.0" y="245.9" text-anchor="start">C16</text>
<text x="970.0" y="255.7" text-anchor="start">6.8nF</text>
<text x="1080.5" y="118.0" text-anchor="middle">C18</text>
<text x="1065.8" y="146.7" text-anchor="start">1.5nF</text>
<text x="1091.5" y="168.1" text-anchor="middle">R31</text>
<text x="1089.8" y="177.5" text-anchor="middle">1meg</text>
<text x="1062.5" y="242.0" text-anchor="start">R29</text>
<text x="1063.5" y="253.6" text-anchor="start">2.2meg</text>
<text x="1149.6" y="115.2" text-anchor="start">27.5V</text>
<text x="1149.6" y="155.8" text-anchor="start">R32</text>
<text x="1149.6" y="165.0" text-anchor="start">2.7k</text>
<text x="1163.7" y="208.1" text-anchor="middle">Q4</text>
<text x="1141.3" y="220.6" text-anchor="start">BC338AP</text>
<text x="1169.5" y="240.0" text-anchor="middle">C19</text>
<text x="1153.0" y="249.9" text-anchor="start">4.7uF</text>
<text x="1114.8" y="323.6" text-anchor="start">R33</text>
<text x="1113.0" y="333.6" text-anchor="start">12k</text>
<text x="1198.6" y="322.4" text-anchor="start">R34</text>
<text x="1199.4" y="332.3" text-anchor="start">22k</text>
</g>
</svg>
<!-- chart window -->
<div class="a" style="left:175px;top:441px;width:1px;height:8px;background:#a8a69a"></div><div class="a" style="left:175px;top:446px;width:1104px;height:1px;background:#aca899"></div><div class="a" style="left:176px;top:447px;width:1103px;height:2px;background:#fff"></div>
<div class="a" style="left:176px;top:449px;width:1102px;height:483px;background:#000"></div>
<svg id="chart" class="a" style="left:0;top:0" width="1280" height="935">
<path d="M334.5,469.5 H1248.5 M334.5,483.5 h6 M334.5,498.5 h6 M334.5,512.5 h6 M334.5,527.5 h6 M334.5,541.5 H1248.5 M334.5,555.5 h6 M334.5,570.5 h6 M334.5,584.5 h6 M334.5,599.5 h6 M334.5,613.5 H1248.5 M334.5,628.5 h6 M334.5,642.5 h6 M334.5,657.5 h6 M334.5,671.5 h6 M334.5,686.5 H1248.5 M334.5,700.5 h6 M334.5,715.5 h6 M334.5,729.5 h6 M334.5,744.5 h6 M334.5,758.5 H1248.5 M334.5,772.5 h6 M334.5,787.5 h6 M334.5,801.5 h6 M334.5,816.5 h6 M334.5,830.5 H1248.5 M334.5,845.5 h6 M334.5,859.5 h6 M334.5,874.5 h6 M334.5,888.5 h6 M334.5,903.5 H1248.5 M334.5,469.5 V903.5 M1248.5,469.5 V903.5 M485.5,469.5 V908.5 M790.5,469.5 V908.5 M1095.5,469.5 V908.5 M364.5,903.5 v-7 M393.5,903.5 v-7 M417.5,903.5 v-7 M438.5,903.5 v-7 M455.5,903.5 v-7 M471.5,903.5 v-7 M577.5,903.5 v-7 M631.5,903.5 v-7 M669.5,903.5 v-7 M698.5,903.5 v-7 M722.5,903.5 v-7 M743.5,903.5 v-7 M760.5,903.5 v-7 M776.5,903.5 v-7 M882.5,903.5 v-7 M936.5,903.5 v-7 M974.5,903.5 v-7 M1003.5,903.5 v-7 M1027.5,903.5 v-7 M1048.5,903.5 v-7 M1065.5,903.5 v-7 M1081.5,903.5 v-7 M1187.5,903.5 v-7 M1241.5,903.5 v-7" stroke="#c4c4c4" stroke-width="1" fill="none"/>
<text x="326" y="473.5" text-anchor="end" class="ct">27.50 dB</text>
<text x="326" y="545.8" text-anchor="end" class="ct">25.00 dB</text>
<text x="326" y="618.2" text-anchor="end" class="ct">22.50 dB</text>
<text x="326" y="690.5" text-anchor="end" class="ct">20.00 dB</text>
<text x="326" y="762.8" text-anchor="end" class="ct">17.50 dB</text>
<text x="326" y="835.2" text-anchor="end" class="ct">15.00 dB</text>
<text x="326" y="907.5" text-anchor="end" class="ct">12.50 dB</text>
<text x="486.5" y="920" text-anchor="middle" class="ct">100.0 Hz</text>
<text x="791.5" y="920" text-anchor="middle" class="ct">1.000kHz</text>
<text x="1096.5" y="920" text-anchor="middle" class="ct">10.00kHz</text>
<text x="186" y="480.3" fill="#33cc33" class="lg">A: c19_2</text>
<text x="186" y="495.7" fill="#33dd33" class="lg">A: c19_2_p1</text>
<text x="186" y="511.1" fill="#e8e860" class="lg">A: c19_2_p2</text>
<text x="186" y="526.5" fill="#33bbee" class="lg">A: c19_2_p3</text>
<text x="186" y="541.9" fill="#cc33cc" class="lg">A: c19_2_p4</text>
<text x="186" y="557.3" fill="#2a9a9a" class="lg">A: c19_2_p5</text>
<path d="M392.8,824.8 L394.8,819.7 L396.8,814.4 L398.8,808.8 L400.8,803.0 L402.8,797.2 L404.8,791.2 L406.8,785.3 L408.8,779.3 L410.8,773.4 L412.8,767.7 L414.8,762.2 L416.8,756.8 L418.8,751.7 L420.8,746.7 L422.8,741.9 L424.8,737.1 L426.8,732.4 L428.8,727.6 L430.8,722.7 L432.8,717.7 L434.8,712.7 L436.8,707.6 L438.8,702.5 L440.8,697.7 L442.8,693.0 L444.8,688.6 L446.8,684.6 L448.8,681.0 L450.8,677.7 L452.8,674.6 L454.8,671.7 L456.8,669.1 L458.8,666.5 L460.8,664.1 L462.8,661.8 L464.8,659.7 L466.8,657.7 L468.8,655.8 L470.8,654.0 L472.8,652.4 L474.8,650.9 L476.8,649.5 L478.8,648.2 L480.8,647.0 L482.8,646.0 L484.8,645.0 L486.8,644.2 L488.8,643.4 L490.8,642.8 L492.8,642.2 L494.8,641.8 L496.8,641.4 L498.8,641.1 L500.8,641.0 L502.8,640.8 L504.8,640.8 L506.8,640.9 L508.8,641.0 L510.8,641.2 L512.8,641.5 L514.8,641.8 L516.8,642.2 L518.8,642.6 L520.8,643.2 L522.8,643.7 L524.8,644.4 L526.8,645.0 L528.8,645.8 L530.8,646.6 L532.8,647.4 L534.8,648.3 L536.8,649.2 L538.8,650.2 L540.8,651.2 L542.8,652.2 L544.8,653.3 L546.8,654.4 L548.8,655.6 L550.8,656.8 L552.8,658.0 L554.8,659.3 L556.8,660.6 L558.8,661.9 L560.8,663.3 L562.8,664.7 L564.8,666.1 L566.8,667.5 L568.8,669.0 L570.8,670.5 L572.8,672.0 L574.8,673.5 L576.8,675.0 L578.8,676.5 L580.8,678.1 L582.8,679.7 L584.8,681.2 L586.8,682.8 L588.8,684.4 L590.8,686.0 L592.8,687.6 L594.8,689.2 L596.8,690.8 L598.8,692.5 L600.8,694.1 L602.8,695.7 L604.8,697.3 L606.8,698.9 L608.8,700.4 L610.8,702.0 L612.8,703.6 L614.8,705.1 L616.8,706.7 L618.8,708.2 L620.8,709.7 L622.8,711.2 L624.8,712.7 L626.8,714.1 L628.8,715.6 L630.8,717.0 L632.8,718.4 L634.8,719.8 L636.8,721.1 L638.8,722.5 L640.8,723.8 L642.8,725.1 L644.8,726.4 L646.8,727.7 L648.8,728.9 L650.8,730.1 L652.8,731.3 L654.8,732.5 L656.8,733.7 L658.8,734.8 L660.8,735.9 L662.8,737.0 L664.8,738.1 L666.8,739.1 L668.8,740.1 L670.8,741.1 L672.8,742.1 L674.8,743.1 L676.8,744.0 L678.8,744.9 L680.8,745.8 L682.8,746.6 L684.8,747.5 L686.8,748.3 L688.8,749.1 L690.8,749.8 L692.8,750.5 L694.8,751.3 L696.8,751.9 L698.8,752.6 L700.8,753.2 L702.8,753.8 L704.8,754.4 L706.8,754.9 L708.8,755.4 L710.8,755.9 L712.8,756.4 L714.8,756.8 L716.8,757.2 L718.8,757.6 L720.8,758.0 L722.8,758.4 L724.8,758.7 L726.8,759.0 L728.8,759.3 L730.8,759.6 L732.8,759.8 L734.8,760.0 L736.8,760.2 L738.8,760.4 L740.8,760.6 L742.8,760.8 L744.8,760.9 L746.8,761.0 L748.8,761.1 L750.8,761.2 L752.8,761.3 L754.8,761.3 L756.8,761.4 L758.8,761.4 L760.8,761.4 L762.8,761.4 L764.8,761.4 L766.8,761.4 L768.8,761.4 L770.8,761.3 L772.8,761.3 L774.8,761.2 L776.8,761.1 L778.8,761.0 L780.8,760.9 L782.8,760.8 L784.8,760.7 L786.8,760.6 L788.8,760.5 L790.8,760.3 L792.8,760.2 L794.8,760.1 L796.8,759.9 L798.8,759.8 L800.8,759.6 L802.8,759.4 L804.8,759.2 L806.8,759.1 L808.8,758.9 L810.8,758.7 L812.8,758.5 L814.8,758.3 L816.8,758.0 L818.8,757.8 L820.8,757.6 L822.8,757.4 L824.8,757.1 L826.8,756.9 L828.8,756.6 L830.8,756.3 L832.8,756.1 L834.8,755.8 L836.8,755.5 L838.8,755.2 L840.8,754.9 L842.8,754.6 L844.8,754.3 L846.8,754.0 L848.8,753.7 L850.8,753.4 L852.8,753.0 L854.8,752.7 L856.8,752.3 L858.8,752.0 L860.8,751.6 L862.8,751.2 L864.8,750.9 L866.8,750.5 L868.8,750.1 L870.8,749.7 L872.8,749.3 L874.8,748.9 L876.8,748.5 L878.8,748.1 L880.8,747.6 L882.8,747.2 L884.8,746.7 L886.8,746.3 L888.8,745.8 L890.8,745.4 L892.8,744.9 L894.8,744.4 L896.8,743.9 L898.8,743.5 L900.8,743.0 L902.8,742.5 L904.8,741.9 L906.8,741.4 L908.8,740.9 L910.8,740.4 L912.8,739.8 L914.8,739.3 L916.8,738.7 L918.8,738.2 L920.8,737.6 L922.8,737.0 L924.8,736.4 L926.8,735.8 L928.8,735.3 L930.8,734.7 L932.8,734.0 L934.8,733.4 L936.8,732.8 L938.8,732.2 L940.8,731.5 L942.8,730.9 L944.8,730.2 L946.8,729.6 L948.8,728.9 L950.8,728.2 L952.8,727.6 L954.8,726.9 L956.8,726.2 L958.8,725.5 L960.8,724.8 L962.8,724.0 L964.8,723.3 L966.8,722.6 L968.8,721.8 L970.8,721.1 L972.8,720.3 L974.8,719.6 L976.8,718.8 L978.8,718.1 L980.8,717.3 L982.8,716.5 L984.8,715.7 L986.8,714.9 L988.8,714.1 L990.8,713.3 L992.8,712.5 L994.8,711.6 L996.8,710.8 L998.8,710.0 L1000.8,709.1 L1002.8,708.3 L1004.8,707.4 L1006.8,706.6 L1008.8,705.7 L1010.8,704.9 L1012.8,704.0 L1014.8,703.1 L1016.8,702.2 L1018.8,701.3 L1020.8,700.4 L1022.8,699.5 L1024.8,698.6 L1026.8,697.7 L1028.8,696.8 L1030.8,695.9 L1032.8,695.0 L1034.8,694.1 L1036.8,693.1 L1038.8,692.2 L1040.8,691.2 L1042.8,690.3 L1044.8,689.4 L1046.8,688.4 L1048.8,687.4 L1050.8,686.5 L1052.8,685.5 L1054.8,684.5 L1056.8,683.6 L1058.8,682.6 L1060.8,681.6 L1062.8,680.6 L1064.8,679.7 L1066.8,678.7 L1068.8,677.7 L1070.8,676.7 L1072.8,675.7 L1074.8,674.7 L1076.8,673.7 L1078.8,672.7 L1080.8,671.6 L1082.8,670.6 L1084.8,669.6 L1086.8,668.6 L1088.8,667.6 L1090.8,666.5 L1092.8,665.5 L1094.8,664.5 L1096.8,663.5 L1098.8,662.4 L1100.8,661.4 L1102.8,660.4 L1104.8,659.3 L1106.8,658.3 L1108.8,657.3 L1110.8,656.2 L1112.8,655.2 L1114.8,654.2 L1116.8,653.2 L1118.8,652.2 L1120.8,651.2 L1122.8,650.2 L1124.8,649.2 L1126.8,648.2 L1128.8,647.2 L1130.8,646.3 L1132.8,645.3 L1134.8,644.4 L1136.8,643.5 L1138.8,642.6 L1140.8,641.7 L1142.8,640.8 L1144.8,639.9 L1146.8,639.1 L1148.8,638.3 L1150.8,637.4 L1152.8,636.7 L1154.8,635.9 L1156.8,635.1 L1158.8,634.4 L1160.8,633.7 L1162.8,633.0 L1164.8,632.4 L1166.8,631.7 L1168.8,631.1 L1170.8,630.5 L1172.8,630.0 L1174.8,629.4 L1176.8,628.9 L1178.8,628.5 L1180.8,628.0 L1182.8,627.6 L1184.8,627.2 L1186.0,627.0" stroke="#33cc33" stroke-width="1.8" fill="none" stroke-linejoin="round"/>
<path d="M392.8,824.9 L394.8,819.3 L396.8,813.7 L398.8,808.0 L400.8,802.4 L402.8,796.8 L404.8,791.1 L406.8,785.5 L408.8,779.9 L410.8,774.3 L412.8,768.7 L414.8,763.2 L416.8,757.7 L418.8,752.2 L420.8,746.8 L422.8,741.5 L424.8,736.3 L426.8,731.1 L428.8,726.0 L430.8,721.0 L432.8,716.1 L434.8,711.3 L436.8,706.7 L438.8,702.1 L440.8,697.7 L442.8,693.5 L444.8,689.4 L446.8,685.5 L448.8,681.7 L450.8,678.2 L452.8,674.8 L454.8,671.7 L456.8,668.8 L458.8,666.2 L460.8,663.7 L462.8,661.4 L464.8,659.3 L466.8,657.3 L468.8,655.4 L470.8,653.6 L472.8,652.0 L474.8,650.4 L476.8,648.9 L478.8,647.6 L480.8,646.3 L482.8,645.1 L484.8,644.0 L486.8,643.0 L488.8,642.1 L490.8,641.2 L492.8,640.5 L494.8,639.9 L496.8,639.3 L498.8,638.8 L500.8,638.4 L502.8,638.1 L504.8,637.8 L506.8,637.6 L508.8,637.5 L510.8,637.5 L512.8,637.5 L514.8,637.7 L516.8,637.8 L518.8,638.1 L520.8,638.4 L522.8,638.8 L524.8,639.2 L526.8,639.7 L528.8,640.3 L530.8,640.9 L532.8,641.6 L534.8,642.3 L536.8,643.1 L538.8,644.0 L540.8,644.9 L542.8,645.8 L544.8,646.8 L546.8,647.8 L548.8,648.9 L550.8,650.1 L552.8,651.2 L554.8,652.4 L556.8,653.7 L558.8,655.0 L560.8,656.3 L562.8,657.7 L564.8,659.1 L566.8,660.5 L568.8,661.9 L570.8,663.4 L572.8,664.9 L574.8,666.5 L576.8,668.0 L578.8,669.6 L580.8,671.2 L582.8,672.8 L584.8,674.5 L586.8,676.1 L588.8,677.8 L590.8,679.4 L592.8,681.1 L594.8,682.8 L596.8,684.5 L598.8,686.2 L600.8,687.9 L602.8,689.6 L604.8,691.3 L606.8,693.0 L608.8,694.7 L610.8,696.4 L612.8,698.1 L614.8,699.8 L616.8,701.5 L618.8,703.1 L620.8,704.8 L622.8,706.4 L624.8,708.0 L626.8,709.6 L628.8,711.2 L630.8,712.7 L632.8,714.2 L634.8,715.7 L636.8,717.2 L638.8,718.6 L640.8,720.1 L642.8,721.4 L644.8,722.8 L646.8,724.1 L648.8,725.3 L650.8,726.6 L652.8,727.8 L654.8,728.9 L656.8,730.0 L658.8,731.1 L660.8,732.1 L662.8,733.0 L664.8,733.9 L666.8,734.8 L668.8,735.6 L670.8,736.3 L672.8,737.0 L674.8,737.7 L676.8,738.2 L678.8,738.7 L680.8,739.2 L682.8,739.5 L684.8,739.8 L686.8,740.1 L688.8,740.3 L690.8,740.4 L692.8,740.5 L694.8,740.5 L696.8,740.5 L698.8,740.4 L700.8,740.2 L702.8,740.0 L704.8,739.8 L706.8,739.5 L708.8,739.2 L710.8,738.8 L712.8,738.4 L714.8,737.9 L716.8,737.4 L718.8,736.9 L720.8,736.3 L722.8,735.7 L724.8,735.1 L726.8,734.4 L728.8,733.7 L730.8,733.0 L732.8,732.3 L734.8,731.5 L736.8,730.7 L738.8,729.9 L740.8,729.0 L742.8,728.2 L744.8,727.3 L746.8,726.4 L748.8,725.5 L750.8,724.6 L752.8,723.7 L754.8,722.7 L756.8,721.8 L758.8,720.8 L760.8,719.9 L762.8,718.9 L764.8,717.9 L766.8,717.0 L768.8,716.0 L770.8,715.0 L772.8,714.1 L774.8,713.1 L776.8,712.1 L778.8,711.1 L780.8,710.2 L782.8,709.2 L784.8,708.2 L786.8,707.2 L788.8,706.2 L790.8,705.3 L792.8,704.3 L794.8,703.3 L796.8,702.3 L798.8,701.4 L800.8,700.4 L802.8,699.4 L804.8,698.4 L806.8,697.5 L808.8,696.5 L810.8,695.6 L812.8,694.6 L814.8,693.6 L816.8,692.7 L818.8,691.8 L820.8,690.8 L822.8,689.9 L824.8,689.0 L826.8,688.0 L828.8,687.1 L830.8,686.2 L832.8,685.3 L834.8,684.4 L836.8,683.5 L838.8,682.6 L840.8,681.8 L842.8,680.9 L844.8,680.0 L846.8,679.2 L848.8,678.3 L850.8,677.4 L852.8,676.6 L854.8,675.7 L856.8,674.9 L858.8,674.0 L860.8,673.2 L862.8,672.3 L864.8,671.5 L866.8,670.6 L868.8,669.8 L870.8,668.9 L872.8,668.1 L874.8,667.2 L876.8,666.4 L878.8,665.5 L880.8,664.7 L882.8,663.8 L884.8,662.9 L886.8,662.1 L888.8,661.2 L890.8,660.3 L892.8,659.5 L894.8,658.6 L896.8,657.7 L898.8,656.8 L900.8,655.9 L902.8,655.0 L904.8,654.1 L906.8,653.2 L908.8,652.2 L910.8,651.3 L912.8,650.4 L914.8,649.4 L916.8,648.4 L918.8,647.5 L920.8,646.5 L922.8,645.5 L924.8,644.5 L926.8,643.5 L928.8,642.5 L930.8,641.5 L932.8,640.4 L934.8,639.4 L936.8,638.3 L938.8,637.2 L940.8,636.1 L942.8,635.0 L944.8,633.9 L946.8,632.7 L948.8,631.6 L950.8,630.4 L952.8,629.2 L954.8,628.1 L956.8,626.8 L958.8,625.6 L960.8,624.4 L962.8,623.1 L964.8,621.9 L966.8,620.6 L968.8,619.4 L970.8,618.1 L972.8,616.8 L974.8,615.5 L976.8,614.2 L978.8,612.9 L980.8,611.6 L982.8,610.3 L984.8,609.0 L986.8,607.7 L988.8,606.4 L990.8,605.1 L992.8,603.8 L994.8,602.5 L996.8,601.2 L998.8,599.9 L1000.8,598.6 L1002.8,597.3 L1004.8,596.0 L1006.8,594.8 L1008.8,593.5 L1010.8,592.2 L1012.8,591.0 L1014.8,589.8 L1016.8,588.5 L1018.8,587.3 L1020.8,586.1 L1022.8,585.0 L1024.8,583.8 L1026.8,582.6 L1028.8,581.5 L1030.8,580.4 L1032.8,579.3 L1034.8,578.2 L1036.8,577.2 L1038.8,576.1 L1040.8,575.1 L1042.8,574.1 L1044.8,573.1 L1046.8,572.2 L1048.8,571.3 L1050.8,570.4 L1052.8,569.5 L1054.8,568.6 L1056.8,567.8 L1058.8,567.0 L1060.8,566.3 L1062.8,565.6 L1064.8,564.9 L1066.8,564.2 L1068.8,563.6 L1070.8,563.0 L1072.8,562.4 L1074.8,561.9 L1076.8,561.4 L1078.8,561.0 L1080.8,560.6 L1082.8,560.2 L1084.8,559.8 L1086.8,559.5 L1088.8,559.3 L1090.8,559.0 L1092.8,558.8 L1094.8,558.7 L1096.8,558.6 L1098.8,558.5 L1100.8,558.4 L1102.8,558.3 L1104.8,558.3 L1106.8,558.4 L1108.8,558.4 L1110.8,558.5 L1112.8,558.6 L1114.8,558.7 L1116.8,558.8 L1118.8,559.0 L1120.8,559.2 L1122.8,559.4 L1124.8,559.7 L1126.8,559.9 L1128.8,560.2 L1130.8,560.5 L1132.8,560.8 L1134.8,561.1 L1136.8,561.5 L1138.8,561.8 L1140.8,562.2 L1142.8,562.6 L1144.8,563.0 L1146.8,563.4 L1148.8,563.8 L1150.8,564.2 L1152.8,564.6 L1154.8,565.1 L1156.8,565.5 L1158.8,566.0 L1160.8,566.4 L1162.8,566.9 L1164.8,567.4 L1166.8,567.9 L1168.8,568.3 L1170.8,568.8 L1172.8,569.3 L1174.8,569.8 L1176.8,570.2 L1178.8,570.7 L1180.8,571.2 L1182.8,571.6 L1184.8,572.1 L1186.0,572.4" stroke="#33dd33" stroke-width="1.8" fill="none" stroke-linejoin="round"/>
<path d="M392.8,824.9 L394.8,819.6 L396.8,814.1 L398.8,808.4 L400.8,802.7 L402.8,796.9 L404.8,791.1 L406.8,785.3 L408.8,779.4 L410.8,773.7 L412.8,768.0 L414.8,762.5 L416.8,757.1 L418.8,751.8 L420.8,746.7 L422.8,741.7 L424.8,736.8 L426.8,731.9 L428.8,727.1 L430.8,722.3 L432.8,717.5 L434.8,712.7 L436.8,707.9 L438.8,703.2 L440.8,698.6 L442.8,694.1 L444.8,689.7 L446.8,685.5 L448.8,681.5 L450.8,677.8 L452.8,674.2 L454.8,670.9 L456.8,668.0 L458.8,665.3 L460.8,662.9 L462.8,660.7 L464.8,658.7 L466.8,656.8 L468.8,655.1 L470.8,653.6 L472.8,652.1 L474.8,650.7 L476.8,649.4 L478.8,648.2 L480.8,647.1 L482.8,646.2 L484.8,645.3 L486.8,644.5 L488.8,643.8 L490.8,643.2 L492.8,642.6 L494.8,642.2 L496.8,641.8 L498.8,641.6 L500.8,641.4 L502.8,641.3 L504.8,641.3 L506.8,641.3 L508.8,641.4 L510.8,641.6 L512.8,641.9 L514.8,642.2 L516.8,642.7 L518.8,643.1 L520.8,643.7 L522.8,644.3 L524.8,645.0 L526.8,645.7 L528.8,646.5 L530.8,647.3 L532.8,648.2 L534.8,649.2 L536.8,650.2 L538.8,651.3 L540.8,652.4 L542.8,653.5 L544.8,654.7 L546.8,656.0 L548.8,657.3 L550.8,658.6 L552.8,660.0 L554.8,661.4 L556.8,662.8 L558.8,664.3 L560.8,665.8 L562.8,667.3 L564.8,668.9 L566.8,670.5 L568.8,672.1 L570.8,673.8 L572.8,675.5 L574.8,677.2 L576.8,678.9 L578.8,680.6 L580.8,682.4 L582.8,684.2 L584.8,686.0 L586.8,687.8 L588.8,689.6 L590.8,691.5 L592.8,693.4 L594.8,695.2 L596.8,697.1 L598.8,699.0 L600.8,700.9 L602.8,702.8 L604.8,704.7 L606.8,706.6 L608.8,708.5 L610.8,710.4 L612.8,712.4 L614.8,714.3 L616.8,716.2 L618.8,718.1 L620.8,720.0 L622.8,721.9 L624.8,723.8 L626.8,725.7 L628.8,727.5 L630.8,729.4 L632.8,731.2 L634.8,733.0 L636.8,734.7 L638.8,736.5 L640.8,738.2 L642.8,739.8 L644.8,741.4 L646.8,743.0 L648.8,744.5 L650.8,746.0 L652.8,747.4 L654.8,748.7 L656.8,750.0 L658.8,751.2 L660.8,752.4 L662.8,753.5 L664.8,754.5 L666.8,755.4 L668.8,756.3 L670.8,757.0 L672.8,757.7 L674.8,758.3 L676.8,758.8 L678.8,759.2 L680.8,759.5 L682.8,759.7 L684.8,759.8 L686.8,759.8 L688.8,759.7 L690.8,759.5 L692.8,759.3 L694.8,758.9 L696.8,758.5 L698.8,757.9 L700.8,757.3 L702.8,756.6 L704.8,755.9 L706.8,755.0 L708.8,754.1 L710.8,753.1 L712.8,752.1 L714.8,751.0 L716.8,749.8 L718.8,748.6 L720.8,747.3 L722.8,745.9 L724.8,744.5 L726.8,743.1 L728.8,741.6 L730.8,740.0 L732.8,738.5 L734.8,736.8 L736.8,735.1 L738.8,733.4 L740.8,731.7 L742.8,729.9 L744.8,728.1 L746.8,726.3 L748.8,724.4 L750.8,722.5 L752.8,720.6 L754.8,718.7 L756.8,716.7 L758.8,714.8 L760.8,712.8 L762.8,710.8 L764.8,708.8 L766.8,706.7 L768.8,704.7 L770.8,702.6 L772.8,700.6 L774.8,698.5 L776.8,696.4 L778.8,694.3 L780.8,692.2 L782.8,690.1 L784.8,688.0 L786.8,685.8 L788.8,683.7 L790.8,681.6 L792.8,679.4 L794.8,677.3 L796.8,675.2 L798.8,673.0 L800.8,670.9 L802.8,668.8 L804.8,666.7 L806.8,664.6 L808.8,662.4 L810.8,660.3 L812.8,658.3 L814.8,656.2 L816.8,654.1 L818.8,652.0 L820.8,650.0 L822.8,647.9 L824.8,645.9 L826.8,643.9 L828.8,641.9 L830.8,640.0 L832.8,638.0 L834.8,636.1 L836.8,634.2 L838.8,632.3 L840.8,630.4 L842.8,628.6 L844.8,626.7 L846.8,624.9 L848.8,623.2 L850.8,621.4 L852.8,619.7 L854.8,618.0 L856.8,616.3 L858.8,614.6 L860.8,613.0 L862.8,611.3 L864.8,609.7 L866.8,608.2 L868.8,606.6 L870.8,605.1 L872.8,603.6 L874.8,602.1 L876.8,600.6 L878.8,599.2 L880.8,597.7 L882.8,596.3 L884.8,595.0 L886.8,593.6 L888.8,592.3 L890.8,590.9 L892.8,589.6 L894.8,588.3 L896.8,587.1 L898.8,585.8 L900.8,584.6 L902.8,583.4 L904.8,582.2 L906.8,581.1 L908.8,579.9 L910.8,578.8 L912.8,577.7 L914.8,576.6 L916.8,575.6 L918.8,574.5 L920.8,573.5 L922.8,572.5 L924.8,571.5 L926.8,570.6 L928.8,569.6 L930.8,568.7 L932.8,567.8 L934.8,566.9 L936.8,566.0 L938.8,565.1 L940.8,564.3 L942.8,563.5 L944.8,562.7 L946.8,561.9 L948.8,561.1 L950.8,560.4 L952.8,559.6 L954.8,558.9 L956.8,558.2 L958.8,557.5 L960.8,556.9 L962.8,556.2 L964.8,555.6 L966.8,555.0 L968.8,554.4 L970.8,553.8 L972.8,553.2 L974.8,552.7 L976.8,552.2 L978.8,551.7 L980.8,551.2 L982.8,550.7 L984.8,550.2 L986.8,549.8 L988.8,549.4 L990.8,548.9 L992.8,548.6 L994.8,548.2 L996.8,547.8 L998.8,547.5 L1000.8,547.2 L1002.8,546.8 L1004.8,546.6 L1006.8,546.3 L1008.8,546.0 L1010.8,545.8 L1012.8,545.6 L1014.8,545.4 L1016.8,545.2 L1018.8,545.0 L1020.8,544.9 L1022.8,544.7 L1024.8,544.6 L1026.8,544.5 L1028.8,544.4 L1030.8,544.4 L1032.8,544.3 L1034.8,544.3 L1036.8,544.3 L1038.8,544.3 L1040.8,544.3 L1042.8,544.3 L1044.8,544.4 L1046.8,544.4 L1048.8,544.5 L1050.8,544.6 L1052.8,544.8 L1054.8,544.9 L1056.8,545.1 L1058.8,545.2 L1060.8,545.4 L1062.8,545.6 L1064.8,545.9 L1066.8,546.1 L1068.8,546.4 L1070.8,546.7 L1072.8,547.0 L1074.8,547.3 L1076.8,547.6 L1078.8,548.0 L1080.8,548.3 L1082.8,548.7 L1084.8,549.1 L1086.8,549.5 L1088.8,550.0 L1090.8,550.4 L1092.8,550.9 L1094.8,551.4 L1096.8,551.9 L1098.8,552.4 L1100.8,552.9 L1102.8,553.4 L1104.8,554.0 L1106.8,554.5 L1108.8,555.1 L1110.8,555.7 L1112.8,556.2 L1114.8,556.8 L1116.8,557.5 L1118.8,558.1 L1120.8,558.7 L1122.8,559.3 L1124.8,560.0 L1126.8,560.6 L1128.8,561.2 L1130.8,561.9 L1132.8,562.6 L1134.8,563.2 L1136.8,563.9 L1138.8,564.6 L1140.8,565.2 L1142.8,565.9 L1144.8,566.6 L1146.8,567.3 L1148.8,568.0 L1150.8,568.7 L1152.8,569.4 L1154.8,570.0 L1156.8,570.7 L1158.8,571.4 L1160.8,572.1 L1162.8,572.8 L1164.8,573.5 L1166.8,574.1 L1168.8,574.8 L1170.8,575.5 L1172.8,576.1 L1174.8,576.8 L1176.8,577.4 L1178.8,578.1 L1180.8,578.7 L1182.8,579.4 L1184.8,580.0 L1186.0,580.4" stroke="#f0f060" stroke-width="1.8" fill="none" stroke-linejoin="round"/>
<path d="M392.8,824.9 L394.8,819.3 L396.8,813.7 L398.8,808.0 L400.8,802.3 L402.8,796.6 L404.8,790.9 L406.8,785.3 L408.8,779.6 L410.8,774.0 L412.8,768.5 L414.8,763.0 L416.8,757.6 L418.8,752.3 L420.8,747.1 L422.8,741.9 L424.8,736.8 L426.8,731.8 L428.8,726.8 L430.8,721.8 L432.8,716.9 L434.8,712.0 L436.8,707.2 L438.8,702.6 L440.8,698.0 L442.8,693.5 L444.8,689.3 L446.8,685.2 L448.8,681.3 L450.8,677.6 L452.8,674.2 L454.8,671.0 L456.8,668.2 L458.8,665.6 L460.8,663.2 L462.8,661.1 L464.8,659.2 L466.8,657.4 L468.8,655.7 L470.8,654.2 L472.8,652.7 L474.8,651.3 L476.8,650.1 L478.8,648.9 L480.8,647.8 L482.8,646.8 L484.8,645.9 L486.8,645.0 L488.8,644.3 L490.8,643.6 L492.8,643.0 L494.8,642.6 L496.8,642.1 L498.8,641.8 L500.8,641.6 L502.8,641.4 L504.8,641.3 L506.8,641.3 L508.8,641.3 L510.8,641.4 L512.8,641.6 L514.8,641.9 L516.8,642.3 L518.8,642.7 L520.8,643.1 L522.8,643.7 L524.8,644.3 L526.8,645.0 L528.8,645.7 L530.8,646.5 L532.8,647.3 L534.8,648.3 L536.8,649.2 L538.8,650.3 L540.8,651.4 L542.8,652.5 L544.8,653.7 L546.8,654.9 L548.8,656.2 L550.8,657.6 L552.8,659.0 L554.8,660.4 L556.8,661.9 L558.8,663.5 L560.8,665.0 L562.8,666.7 L564.8,668.3 L566.8,670.0 L568.8,671.8 L570.8,673.5 L572.8,675.4 L574.8,677.2 L576.8,679.1 L578.8,681.0 L580.8,682.9 L582.8,684.8 L584.8,686.8 L586.8,688.8 L588.8,690.8 L590.8,692.8 L592.8,694.8 L594.8,696.9 L596.8,698.9 L598.8,701.0 L600.8,703.1 L602.8,705.1 L604.8,707.2 L606.8,709.3 L608.8,711.4 L610.8,713.4 L612.8,715.5 L614.8,717.6 L616.8,719.6 L618.8,721.6 L620.8,723.7 L622.8,725.7 L624.8,727.7 L626.8,729.6 L628.8,731.6 L630.8,733.5 L632.8,735.4 L634.8,737.3 L636.8,739.1 L638.8,741.0 L640.8,742.7 L642.8,744.5 L644.8,746.2 L646.8,747.9 L648.8,749.5 L650.8,751.1 L652.8,752.6 L654.8,754.1 L656.8,755.6 L658.8,757.0 L660.8,758.3 L662.8,759.6 L664.8,760.9 L666.8,762.1 L668.8,763.2 L670.8,764.2 L672.8,765.2 L674.8,766.2 L676.8,767.0 L678.8,767.8 L680.8,768.6 L682.8,769.2 L684.8,769.8 L686.8,770.3 L688.8,770.7 L690.8,771.0 L692.8,771.3 L694.8,771.5 L696.8,771.6 L698.8,771.6 L700.8,771.5 L702.8,771.3 L704.8,771.0 L706.8,770.7 L708.8,770.2 L710.8,769.6 L712.8,769.0 L714.8,768.2 L716.8,767.3 L718.8,766.4 L720.8,765.3 L722.8,764.1 L724.8,762.8 L726.8,761.4 L728.8,759.9 L730.8,758.3 L732.8,756.5 L734.8,754.6 L736.8,752.6 L738.8,750.5 L740.8,748.3 L742.8,745.9 L744.8,743.4 L746.8,740.9 L748.8,738.2 L750.8,735.4 L752.8,732.5 L754.8,729.6 L756.8,726.6 L758.8,723.5 L760.8,720.4 L762.8,717.2 L764.8,714.0 L766.8,710.7 L768.8,707.4 L770.8,704.1 L772.8,700.8 L774.8,697.4 L776.8,694.1 L778.8,690.7 L780.8,687.4 L782.8,684.0 L784.8,680.6 L786.8,677.3 L788.8,673.9 L790.8,670.5 L792.8,667.1 L794.8,663.8 L796.8,660.4 L798.8,657.1 L800.8,653.7 L802.8,650.4 L804.8,647.1 L806.8,643.8 L808.8,640.5 L810.8,637.3 L812.8,634.0 L814.8,630.8 L816.8,627.6 L818.8,624.5 L820.8,621.4 L822.8,618.3 L824.8,615.2 L826.8,612.2 L828.8,609.2 L830.8,606.2 L832.8,603.3 L834.8,600.5 L836.8,597.6 L838.8,594.9 L840.8,592.1 L842.8,589.5 L844.8,586.8 L846.8,584.3 L848.8,581.7 L850.8,579.3 L852.8,576.9 L854.8,574.5 L856.8,572.3 L858.8,570.1 L860.8,567.9 L862.8,565.8 L864.8,563.8 L866.8,561.8 L868.8,559.9 L870.8,558.0 L872.8,556.2 L874.8,554.5 L876.8,552.8 L878.8,551.2 L880.8,549.6 L882.8,548.1 L884.8,546.6 L886.8,545.2 L888.8,543.9 L890.8,542.5 L892.8,541.3 L894.8,540.1 L896.8,538.9 L898.8,537.8 L900.8,536.7 L902.8,535.7 L904.8,534.7 L906.8,533.8 L908.8,532.9 L910.8,532.1 L912.8,531.2 L914.8,530.5 L916.8,529.8 L918.8,529.1 L920.8,528.5 L922.8,527.9 L924.8,527.3 L926.8,526.8 L928.8,526.3 L930.8,525.8 L932.8,525.4 L934.8,525.0 L936.8,524.7 L938.8,524.4 L940.8,524.1 L942.8,523.9 L944.8,523.7 L946.8,523.5 L948.8,523.3 L950.8,523.2 L952.8,523.1 L954.8,523.0 L956.8,523.0 L958.8,522.9 L960.8,523.0 L962.8,523.0 L964.8,523.0 L966.8,523.1 L968.8,523.2 L970.8,523.3 L972.8,523.5 L974.8,523.7 L976.8,523.9 L978.8,524.1 L980.8,524.3 L982.8,524.6 L984.8,524.8 L986.8,525.1 L988.8,525.4 L990.8,525.7 L992.8,526.1 L994.8,526.5 L996.8,526.8 L998.8,527.2 L1000.8,527.6 L1002.8,528.1 L1004.8,528.5 L1006.8,528.9 L1008.8,529.4 L1010.8,529.9 L1012.8,530.4 L1014.8,530.9 L1016.8,531.4 L1018.8,531.9 L1020.8,532.5 L1022.8,533.0 L1024.8,533.6 L1026.8,534.2 L1028.8,534.7 L1030.8,535.3 L1032.8,535.9 L1034.8,536.5 L1036.8,537.1 L1038.8,537.7 L1040.8,538.4 L1042.8,539.0 L1044.8,539.6 L1046.8,540.3 L1048.8,540.9 L1050.8,541.5 L1052.8,542.2 L1054.8,542.8 L1056.8,543.5 L1058.8,544.1 L1060.8,544.8 L1062.8,545.5 L1064.8,546.1 L1066.8,546.8 L1068.8,547.4 L1070.8,548.1 L1072.8,548.7 L1074.8,549.4 L1076.8,550.0 L1078.8,550.7 L1080.8,551.3 L1082.8,552.0 L1084.8,552.6 L1086.8,553.2 L1088.8,553.9 L1090.8,554.5 L1092.8,555.1 L1094.8,555.7 L1096.8,556.4 L1098.8,557.0 L1100.8,557.6 L1102.8,558.2 L1104.8,558.8 L1106.8,559.4 L1108.8,560.0 L1110.8,560.7 L1112.8,561.3 L1114.8,561.9 L1116.8,562.5 L1118.8,563.1 L1120.8,563.7 L1122.8,564.3 L1124.8,564.9 L1126.8,565.5 L1128.8,566.1 L1130.8,566.8 L1132.8,567.4 L1134.8,568.0 L1136.8,568.6 L1138.8,569.2 L1140.8,569.9 L1142.8,570.5 L1144.8,571.1 L1146.8,571.8 L1148.8,572.4 L1150.8,573.0 L1152.8,573.7 L1154.8,574.3 L1156.8,575.0 L1158.8,575.6 L1160.8,576.3 L1162.8,577.0 L1164.8,577.6 L1166.8,578.3 L1168.8,579.0 L1170.8,579.7 L1172.8,580.4 L1174.8,581.1 L1176.8,581.8 L1178.8,582.5 L1180.8,583.2 L1182.8,583.9 L1184.8,584.7 L1186.0,585.1" stroke="#33ccee" stroke-width="1.8" fill="none" stroke-linejoin="round"/>
<path d="M392.8,824.9 L394.8,819.3 L396.8,813.7 L398.8,808.0 L400.8,802.4 L402.8,796.7 L404.8,791.0 L406.8,785.3 L408.8,779.6 L410.8,774.0 L412.8,768.5 L414.8,763.0 L416.8,757.6 L418.8,752.3 L420.8,747.0 L422.8,741.8 L424.8,736.7 L426.8,731.6 L428.8,726.7 L430.8,721.7 L432.8,716.8 L434.8,712.0 L436.8,707.3 L438.8,702.6 L440.8,698.1 L442.8,693.7 L444.8,689.5 L446.8,685.5 L448.8,681.6 L450.8,678.0 L452.8,674.5 L454.8,671.4 L456.8,668.5 L458.8,665.8 L460.8,663.4 L462.8,661.1 L464.8,659.1 L466.8,657.2 L468.8,655.5 L470.8,653.8 L472.8,652.3 L474.8,650.9 L476.8,649.6 L478.8,648.3 L480.8,647.2 L482.8,646.2 L484.8,645.3 L486.8,644.4 L488.8,643.7 L490.8,643.1 L492.8,642.5 L494.8,642.1 L496.8,641.7 L498.8,641.4 L500.8,641.2 L502.8,641.1 L504.8,641.1 L506.8,641.1 L508.8,641.2 L510.8,641.4 L512.8,641.7 L514.8,642.0 L516.8,642.4 L518.8,642.9 L520.8,643.5 L522.8,644.1 L524.8,644.7 L526.8,645.5 L528.8,646.3 L530.8,647.1 L532.8,648.1 L534.8,649.0 L536.8,650.0 L538.8,651.1 L540.8,652.2 L542.8,653.4 L544.8,654.6 L546.8,655.9 L548.8,657.2 L550.8,658.6 L552.8,659.9 L554.8,661.4 L556.8,662.8 L558.8,664.3 L560.8,665.9 L562.8,667.4 L564.8,669.0 L566.8,670.6 L568.8,672.3 L570.8,674.0 L572.8,675.7 L574.8,677.4 L576.8,679.2 L578.8,681.0 L580.8,682.8 L582.8,684.6 L584.8,686.5 L586.8,688.4 L588.8,690.3 L590.8,692.2 L592.8,694.1 L594.8,696.1 L596.8,698.1 L598.8,700.1 L600.8,702.1 L602.8,704.1 L604.8,706.2 L606.8,708.2 L608.8,710.3 L610.8,712.4 L612.8,714.5 L614.8,716.6 L616.8,718.7 L618.8,720.8 L620.8,722.9 L622.8,725.1 L624.8,727.2 L626.8,729.4 L628.8,731.5 L630.8,733.6 L632.8,735.8 L634.8,737.9 L636.8,740.0 L638.8,742.1 L640.8,744.1 L642.8,746.2 L644.8,748.2 L646.8,750.2 L648.8,752.1 L650.8,754.0 L652.8,755.9 L654.8,757.7 L656.8,759.5 L658.8,761.2 L660.8,762.9 L662.8,764.6 L664.8,766.1 L666.8,767.6 L668.8,769.1 L670.8,770.5 L672.8,771.8 L674.8,773.0 L676.8,774.2 L678.8,775.2 L680.8,776.2 L682.8,777.2 L684.8,778.0 L686.8,778.7 L688.8,779.4 L690.8,779.9 L692.8,780.4 L694.8,780.8 L696.8,781.0 L698.8,781.2 L700.8,781.3 L702.8,781.2 L704.8,781.1 L706.8,780.9 L708.8,780.5 L710.8,780.1 L712.8,779.5 L714.8,778.8 L716.8,778.0 L718.8,777.1 L720.8,776.1 L722.8,774.9 L724.8,773.6 L726.8,772.2 L728.8,770.7 L730.8,769.1 L732.8,767.3 L734.8,765.4 L736.8,763.3 L738.8,761.2 L740.8,758.8 L742.8,756.4 L744.8,753.8 L746.8,751.1 L748.8,748.3 L750.8,745.3 L752.8,742.3 L754.8,739.1 L756.8,735.9 L758.8,732.5 L760.8,729.0 L762.8,725.5 L764.8,721.8 L766.8,718.1 L768.8,714.3 L770.8,710.4 L772.8,706.5 L774.8,702.5 L776.8,698.4 L778.8,694.3 L780.8,690.2 L782.8,686.0 L784.8,681.7 L786.8,677.5 L788.8,673.2 L790.8,668.9 L792.8,664.6 L794.8,660.3 L796.8,656.0 L798.8,651.7 L800.8,647.4 L802.8,643.2 L804.8,638.9 L806.8,634.7 L808.8,630.5 L810.8,626.3 L812.8,622.0 L814.8,617.8 L816.8,613.6 L818.8,609.3 L820.8,605.1 L822.8,600.9 L824.8,596.6 L826.8,592.4 L828.8,588.2 L830.8,584.1 L832.8,580.0 L834.8,575.9 L836.8,571.9 L838.8,567.9 L840.8,564.0 L842.8,560.1 L844.8,556.4 L846.8,552.7 L848.8,549.1 L850.8,545.6 L852.8,542.2 L854.8,538.9 L856.8,535.7 L858.8,532.7 L860.8,529.7 L862.8,526.9 L864.8,524.2 L866.8,521.5 L868.8,519.0 L870.8,516.6 L872.8,514.4 L874.8,512.2 L876.8,510.1 L878.8,508.2 L880.8,506.3 L882.8,504.6 L884.8,503.0 L886.8,501.4 L888.8,500.0 L890.8,498.7 L892.8,497.6 L894.8,496.5 L896.8,495.5 L898.8,494.6 L900.8,493.9 L902.8,493.2 L904.8,492.7 L906.8,492.2 L908.8,491.9 L910.8,491.6 L912.8,491.4 L914.8,491.4 L916.8,491.4 L918.8,491.4 L920.8,491.6 L922.8,491.8 L924.8,492.1 L926.8,492.4 L928.8,492.8 L930.8,493.2 L932.8,493.7 L934.8,494.3 L936.8,494.9 L938.8,495.5 L940.8,496.2 L942.8,496.9 L944.8,497.7 L946.8,498.4 L948.8,499.2 L950.8,500.0 L952.8,500.8 L954.8,501.7 L956.8,502.5 L958.8,503.3 L960.8,504.2 L962.8,505.0 L964.8,505.9 L966.8,506.7 L968.8,507.5 L970.8,508.4 L972.8,509.2 L974.8,510.0 L976.8,510.9 L978.8,511.7 L980.8,512.5 L982.8,513.3 L984.8,514.1 L986.8,515.0 L988.8,515.8 L990.8,516.6 L992.8,517.4 L994.8,518.2 L996.8,519.0 L998.8,519.8 L1000.8,520.6 L1002.8,521.5 L1004.8,522.3 L1006.8,523.1 L1008.8,523.9 L1010.8,524.7 L1012.8,525.4 L1014.8,526.2 L1016.8,527.0 L1018.8,527.8 L1020.8,528.6 L1022.8,529.4 L1024.8,530.2 L1026.8,531.0 L1028.8,531.7 L1030.8,532.5 L1032.8,533.3 L1034.8,534.1 L1036.8,534.9 L1038.8,535.6 L1040.8,536.4 L1042.8,537.2 L1044.8,537.9 L1046.8,538.7 L1048.8,539.5 L1050.8,540.2 L1052.8,541.0 L1054.8,541.7 L1056.8,542.5 L1058.8,543.3 L1060.8,544.0 L1062.8,544.8 L1064.8,545.5 L1066.8,546.3 L1068.8,547.0 L1070.8,547.8 L1072.8,548.5 L1074.8,549.2 L1076.8,550.0 L1078.8,550.7 L1080.8,551.5 L1082.8,552.2 L1084.8,552.9 L1086.8,553.7 L1088.8,554.4 L1090.8,555.1 L1092.8,555.9 L1094.8,556.6 L1096.8,557.3 L1098.8,558.0 L1100.8,558.8 L1102.8,559.5 L1104.8,560.2 L1106.8,560.9 L1108.8,561.6 L1110.8,562.3 L1112.8,563.1 L1114.8,563.8 L1116.8,564.5 L1118.8,565.2 L1120.8,565.9 L1122.8,566.6 L1124.8,567.3 L1126.8,568.0 L1128.8,568.7 L1130.8,569.4 L1132.8,570.1 L1134.8,570.8 L1136.8,571.5 L1138.8,572.2 L1140.8,572.9 L1142.8,573.6 L1144.8,574.2 L1146.8,574.9 L1148.8,575.6 L1150.8,576.3 L1152.8,577.0 L1154.8,577.7 L1156.8,578.3 L1158.8,579.0 L1160.8,579.7 L1162.8,580.4 L1164.8,581.0 L1166.8,581.7 L1168.8,582.4 L1170.8,583.1 L1172.8,583.7 L1174.8,584.4 L1176.8,585.1 L1178.8,585.7 L1180.8,586.4 L1182.8,587.0 L1184.8,587.7 L1186.0,588.1" stroke="#cc33cc" stroke-width="1.8" fill="none" stroke-linejoin="round"/>
<path d="M392.8,825.1 L394.8,819.2 L396.8,813.3 L398.8,807.5 L400.8,801.8 L402.8,796.1 L404.8,790.5 L406.8,784.9 L408.8,779.4 L410.8,774.0 L412.8,768.6 L414.8,763.2 L416.8,757.9 L418.8,752.7 L420.8,747.5 L422.8,742.3 L424.8,737.2 L426.8,732.2 L428.8,727.2 L430.8,722.2 L432.8,717.2 L434.8,712.3 L436.8,707.5 L438.8,702.8 L440.8,698.2 L442.8,693.7 L444.8,689.4 L446.8,685.3 L448.8,681.4 L450.8,677.6 L452.8,674.2 L454.8,671.0 L456.8,668.1 L458.8,665.4 L460.8,663.0 L462.8,660.9 L464.8,658.9 L466.8,657.0 L468.8,655.3 L470.8,653.7 L472.8,652.2 L474.8,650.9 L476.8,649.6 L478.8,648.4 L480.8,647.3 L482.8,646.3 L484.8,645.4 L486.8,644.6 L488.8,643.9 L490.8,643.2 L492.8,642.7 L494.8,642.3 L496.8,641.9 L498.8,641.6 L500.8,641.4 L502.8,641.3 L504.8,641.2 L506.8,641.3 L508.8,641.4 L510.8,641.6 L512.8,641.8 L514.8,642.1 L516.8,642.5 L518.8,643.0 L520.8,643.5 L522.8,644.1 L524.8,644.8 L526.8,645.5 L528.8,646.3 L530.8,647.1 L532.8,648.0 L534.8,649.0 L536.8,650.0 L538.8,651.0 L540.8,652.1 L542.8,653.3 L544.8,654.5 L546.8,655.8 L548.8,657.1 L550.8,658.4 L552.8,659.8 L554.8,661.2 L556.8,662.7 L558.8,664.1 L560.8,665.7 L562.8,667.2 L564.8,668.8 L566.8,670.5 L568.8,672.1 L570.8,673.8 L572.8,675.5 L574.8,677.3 L576.8,679.1 L578.8,680.9 L580.8,682.7 L582.8,684.6 L584.8,686.4 L586.8,688.3 L588.8,690.3 L590.8,692.2 L592.8,694.2 L594.8,696.2 L596.8,698.2 L598.8,700.2 L600.8,702.2 L602.8,704.3 L604.8,706.3 L606.8,708.4 L608.8,710.5 L610.8,712.6 L612.8,714.7 L614.8,716.9 L616.8,719.0 L618.8,721.1 L620.8,723.3 L622.8,725.5 L624.8,727.6 L626.8,729.8 L628.8,731.9 L630.8,734.1 L632.8,736.2 L634.8,738.4 L636.8,740.5 L638.8,742.6 L640.8,744.7 L642.8,746.8 L644.8,748.8 L646.8,750.8 L648.8,752.8 L650.8,754.8 L652.8,756.7 L654.8,758.6 L656.8,760.4 L658.8,762.2 L660.8,764.0 L662.8,765.7 L664.8,767.3 L666.8,768.9 L668.8,770.4 L670.8,771.9 L672.8,773.3 L674.8,774.7 L676.8,776.0 L678.8,777.2 L680.8,778.3 L682.8,779.4 L684.8,780.3 L686.8,781.2 L688.8,782.0 L690.8,782.8 L692.8,783.4 L694.8,783.9 L696.8,784.4 L698.8,784.7 L700.8,785.0 L702.8,785.1 L704.8,785.1 L706.8,785.0 L708.8,784.9 L710.8,784.5 L712.8,784.1 L714.8,783.6 L716.8,782.9 L718.8,782.1 L720.8,781.1 L722.8,780.1 L724.8,778.9 L726.8,777.5 L728.8,776.0 L730.8,774.4 L732.8,772.6 L734.8,770.7 L736.8,768.6 L738.8,766.3 L740.8,763.9 L742.8,761.4 L744.8,758.7 L746.8,755.8 L748.8,752.8 L750.8,749.7 L752.8,746.4 L754.8,743.1 L756.8,739.6 L758.8,736.0 L760.8,732.3 L762.8,728.5 L764.8,724.6 L766.8,720.6 L768.8,716.6 L770.8,712.5 L772.8,708.3 L774.8,704.1 L776.8,699.8 L778.8,695.5 L780.8,691.1 L782.8,686.7 L784.8,682.3 L786.8,677.9 L788.8,673.4 L790.8,668.9 L792.8,664.4 L794.8,659.9 L796.8,655.4 L798.8,650.8 L800.8,646.3 L802.8,641.7 L804.8,637.1 L806.8,632.5 L808.8,627.9 L810.8,623.3 L812.8,618.7 L814.8,614.1 L816.8,609.5 L818.8,604.9 L820.8,600.3 L822.8,595.7 L824.8,591.1 L826.8,586.5 L828.8,582.0 L830.8,577.4 L832.8,572.9 L834.8,568.4 L836.8,563.9 L838.8,559.4 L840.8,555.1 L842.8,550.7 L844.8,546.5 L846.8,542.3 L848.8,538.1 L850.8,534.1 L852.8,530.2 L854.8,526.4 L856.8,522.7 L858.8,519.1 L860.8,515.6 L862.8,512.3 L864.8,509.2 L866.8,506.2 L868.8,503.3 L870.8,500.6 L872.8,498.1 L874.8,495.8 L876.8,493.6 L878.8,491.6 L880.8,489.8 L882.8,488.1 L884.8,486.5 L886.8,485.1 L888.8,483.9 L890.8,482.7 L892.8,481.8 L894.8,480.9 L896.8,480.2 L898.8,479.6 L900.8,479.1 L902.8,478.7 L904.8,478.4 L906.8,478.2 L908.8,478.2 L910.8,478.2 L912.8,478.3 L914.8,478.5 L916.8,478.8 L918.8,479.2 L920.8,479.6 L922.8,480.1 L924.8,480.7 L926.8,481.4 L928.8,482.1 L930.8,482.9 L932.8,483.7 L934.8,484.5 L936.8,485.4 L938.8,486.4 L940.8,487.4 L942.8,488.4 L944.8,489.4 L946.8,490.5 L948.8,491.6 L950.8,492.7 L952.8,493.8 L954.8,494.9 L956.8,496.0 L958.8,497.1 L960.8,498.2 L962.8,499.3 L964.8,500.4 L966.8,501.5 L968.8,502.5 L970.8,503.6 L972.8,504.6 L974.8,505.7 L976.8,506.7 L978.8,507.8 L980.8,508.8 L982.8,509.8 L984.8,510.8 L986.8,511.8 L988.8,512.8 L990.8,513.8 L992.8,514.8 L994.8,515.7 L996.8,516.7 L998.8,517.7 L1000.8,518.6 L1002.8,519.5 L1004.8,520.5 L1006.8,521.4 L1008.8,522.3 L1010.8,523.2 L1012.8,524.2 L1014.8,525.1 L1016.8,526.0 L1018.8,526.8 L1020.8,527.7 L1022.8,528.6 L1024.8,529.5 L1026.8,530.3 L1028.8,531.2 L1030.8,532.1 L1032.8,532.9 L1034.8,533.8 L1036.8,534.6 L1038.8,535.4 L1040.8,536.2 L1042.8,537.1 L1044.8,537.9 L1046.8,538.7 L1048.8,539.5 L1050.8,540.3 L1052.8,541.1 L1054.8,541.9 L1056.8,542.7 L1058.8,543.5 L1060.8,544.3 L1062.8,545.0 L1064.8,545.8 L1066.8,546.6 L1068.8,547.3 L1070.8,548.1 L1072.8,548.8 L1074.8,549.6 L1076.8,550.3 L1078.8,551.1 L1080.8,551.8 L1082.8,552.6 L1084.8,553.3 L1086.8,554.0 L1088.8,554.7 L1090.8,555.5 L1092.8,556.2 L1094.8,556.9 L1096.8,557.6 L1098.8,558.3 L1100.8,559.0 L1102.8,559.7 L1104.8,560.4 L1106.8,561.1 L1108.8,561.8 L1110.8,562.5 L1112.8,563.2 L1114.8,563.9 L1116.8,564.6 L1118.8,565.3 L1120.8,566.0 L1122.8,566.7 L1124.8,567.3 L1126.8,568.0 L1128.8,568.7 L1130.8,569.4 L1132.8,570.0 L1134.8,570.7 L1136.8,571.4 L1138.8,572.1 L1140.8,572.7 L1142.8,573.4 L1144.8,574.1 L1146.8,574.7 L1148.8,575.4 L1150.8,576.1 L1152.8,576.7 L1154.8,577.4 L1156.8,578.0 L1158.8,578.7 L1160.8,579.4 L1162.8,580.0 L1164.8,580.7 L1166.8,581.4 L1168.8,582.0 L1170.8,582.7 L1172.8,583.3 L1174.8,584.0 L1176.8,584.7 L1178.8,585.3 L1180.8,586.0 L1182.8,586.7 L1184.8,587.3 L1186.0,587.7" stroke="#2a9a9a" stroke-width="1.8" fill="none" stroke-linejoin="round"/>
</svg>
<div class="a" style="left:176px;top:932px;width:1102px;height:17px;background:#f6f5f0"></div>
<div class="a btn3d" style="left:176px;top:932px;width:17px;height:17px"></div>
<div class="a btn3d" style="left:1261px;top:932px;width:17px;height:17px"></div>
<div class="a btn3d" style="left:719px;top:932px;width:17px;height:17px"></div>
<svg class="a" style="left:176px;top:932px" width="1102" height="17"><path d="M6,8.5 l4,-4 v8 z M1096,8.5 l-4,-4 v8 z" fill="#000"/></svg>
<div class="a" style="left:175px;top:932px;width:1px;height:41px;background:#716f64"></div>
<div class="a" style="left:176px;top:954px;width:1102px;height:1px;background:#000"></div>
<svg class="a" style="left:176px;top:950px" width="200" height="25"><path d="M9,5 L15,21 H74 L79,5" fill="#ece9d8" stroke="#000" stroke-width="1.2"/></svg>
<div class="a" style="left:190px;top:957px">AC Analysis</div>
<!-- status bar -->
<div class="a" style="left:0;top:974px;width:1280px;height:1px;background:#fff"></div>
<div class="a" style="left:2px;top:977px;width:48px;height:17px;border:1px solid;border-color:#aca899 #fff #fff #aca899"></div>
<div class="a" style="left:52px;top:977px;width:1228px;height:17px;border:1px solid;border-color:#aca899 #fff #fff #aca899"></div>
<!-- taskbar -->
<div class="a" style="left:0;top:994px;width:1280px;height:30px;background:linear-gradient(#3168d5 0,#4a8df2 2px,#2a66e2 5px,#245edc 50%,#2257d2 85%,#1941a5 100%)"></div>
<div class="a" style="left:0;top:994px;width:98px;height:30px;border-radius:0 10px 10px 0;background:linear-gradient(#3c8f3c 0,#5fb55f 3px,#3a9a3a 8px,#2f8a2f 70%,#267826 100%)"></div>
<svg class="a" style="left:8px;top:999px" width="22" height="20"><path d="M2,4 q4,-2 8,0 v7 q-4,-2 -8,0 z" fill="#f0502a"/><path d="M11,4 q4,2 8,0 v7 q-4,2 -8,0 z" fill="#5ac23a"/><path d="M2,12 q4,-2 8,0 v7 q-4,-2 -8,0 z" fill="#2a7af0"/><path d="M11,12 q4,2 8,0 v7 q-4,2 -8,0 z" fill="#ffd020"/></svg>
<div class="a" style="left:35px;top:998px;color:#fff;font-size:18px;font-weight:bold;font-style:italic;text-shadow:1px 1px 1px #1a4a1a">Start</div>
<div class="a task" style="left:108px;width:158px;background:linear-gradient(#5a9cf8,#3c80f0 50%,#3878ea)"></div>
<div class="a task" style="left:268px;width:159px;background:linear-gradient(#5a9cf8,#3c80f0 50%,#3878ea)"></div>
<div class="a task" style="left:429px;width:159px;background:linear-gradient(#1c4ec0,#1e52c8 50%,#2458d0)"></div>
<svg class="a" style="left:116px;top:1001px" width="16" height="16"><circle cx="8" cy="8" r="7" fill="#e86a10"/><circle cx="9" cy="7" r="4" fill="#3050b0"/><path d="M2,6 q3,9 12,6 q-7,2 -8,-6" fill="#f0a020"/></svg>
<svg class="a" style="left:277px;top:1001px" width="16" height="16"><circle cx="8" cy="8" r="7" fill="#e86a10"/><circle cx="9" cy="7" r="4" fill="#3050b0"/><path d="M2,6 q3,9 12,6 q-7,2 -8,-6" fill="#f0a020"/></svg>
<div class="a" style="left:437px;top:1001px;width:16px;height:16px;background:#f7d0f0;border:1px solid #fff"><div class="a" style="left:9px;top:2px;width:5px;height:5px;border-radius:3px;background:#d02020"></div><div class="a" style="left:9px;top:9px;width:5px;height:5px;border-radius:3px;background:#1030c0"></div><div class="a" style="left:2px;top:3px;width:6px;height:1px;background:#333"></div></div>
<div class="a" style="left:137px;top:1003px;color:#fff;font-size:11px;letter-spacing:-0.1px">Hangszínszabályzó - ...</div>
<div class="a" style="left:297px;top:1003px;color:#fff;font-size:11px;letter-spacing:-0.1px">Hangszín-szab..jpg (J...</div>
<div class="a" style="left:459px;top:1003px;color:#fff;font-size:11px;letter-spacing:-0.1px">CircuitMaker</div>
<div class="a" style="left:1097px;top:1003px;color:#fff;font-size:11px;letter-spacing:-0.1px">HU</div>
<div class="a" style="left:1133px;top:994px;width:147px;height:30px;background:linear-gradient(#1a8ae8 0,#20a0f8 3px,#0f90ef 50%,#0d84e0 100%);border-left:1px solid #0950b0"></div>
<svg class="a" style="left:1140px;top:1000px" width="100" height="20">
 <path d="M4,15 l10,-10 M6,15 l9,-9 M8,15 l8,-8" stroke="#e03030" stroke-width="1.5"/><path d="M3,16 h13" stroke="#fff" stroke-width="2"/>
 <path d="M25,3 l6,2 v6 q0,5 -6,8 q-6,-3 -6,-8 v-6 z" fill="#d02020" stroke="#fff" stroke-width="0.8"/><path d="M23,9 l4,4 M27,9 l-4,4" stroke="#fff" stroke-width="1.5"/>
 <path d="M42,8 h3 l5,-4 v12 l-5,-4 h-3 z" fill="#f08040" stroke="#222" stroke-width="0.8"/><path d="M52,6 q2,4 0,8 M54,4 q3,6 0,12" stroke="#222" fill="none"/>
 <circle cx="65" cy="9" r="6" fill="#c0c8d0" stroke="#555"/><circle cx="65" cy="9" r="2.5" fill="#444"/>
 <path d="M82,3 l5,2 v10 l-5,2 l-5,-2 v-10 z" fill="#1a2a9a" stroke="#0a0a50"/><path d="M80,7 l5,5 l-2,2 v-10 l2,2 l-5,5" stroke="#e02020" fill="none" stroke-width="1.2"/>
</svg>
<div class="a" style="left:1239px;top:1003px;color:#fff;font-size:11px;letter-spacing:-0.1px">20:15</div>
</body></html>
